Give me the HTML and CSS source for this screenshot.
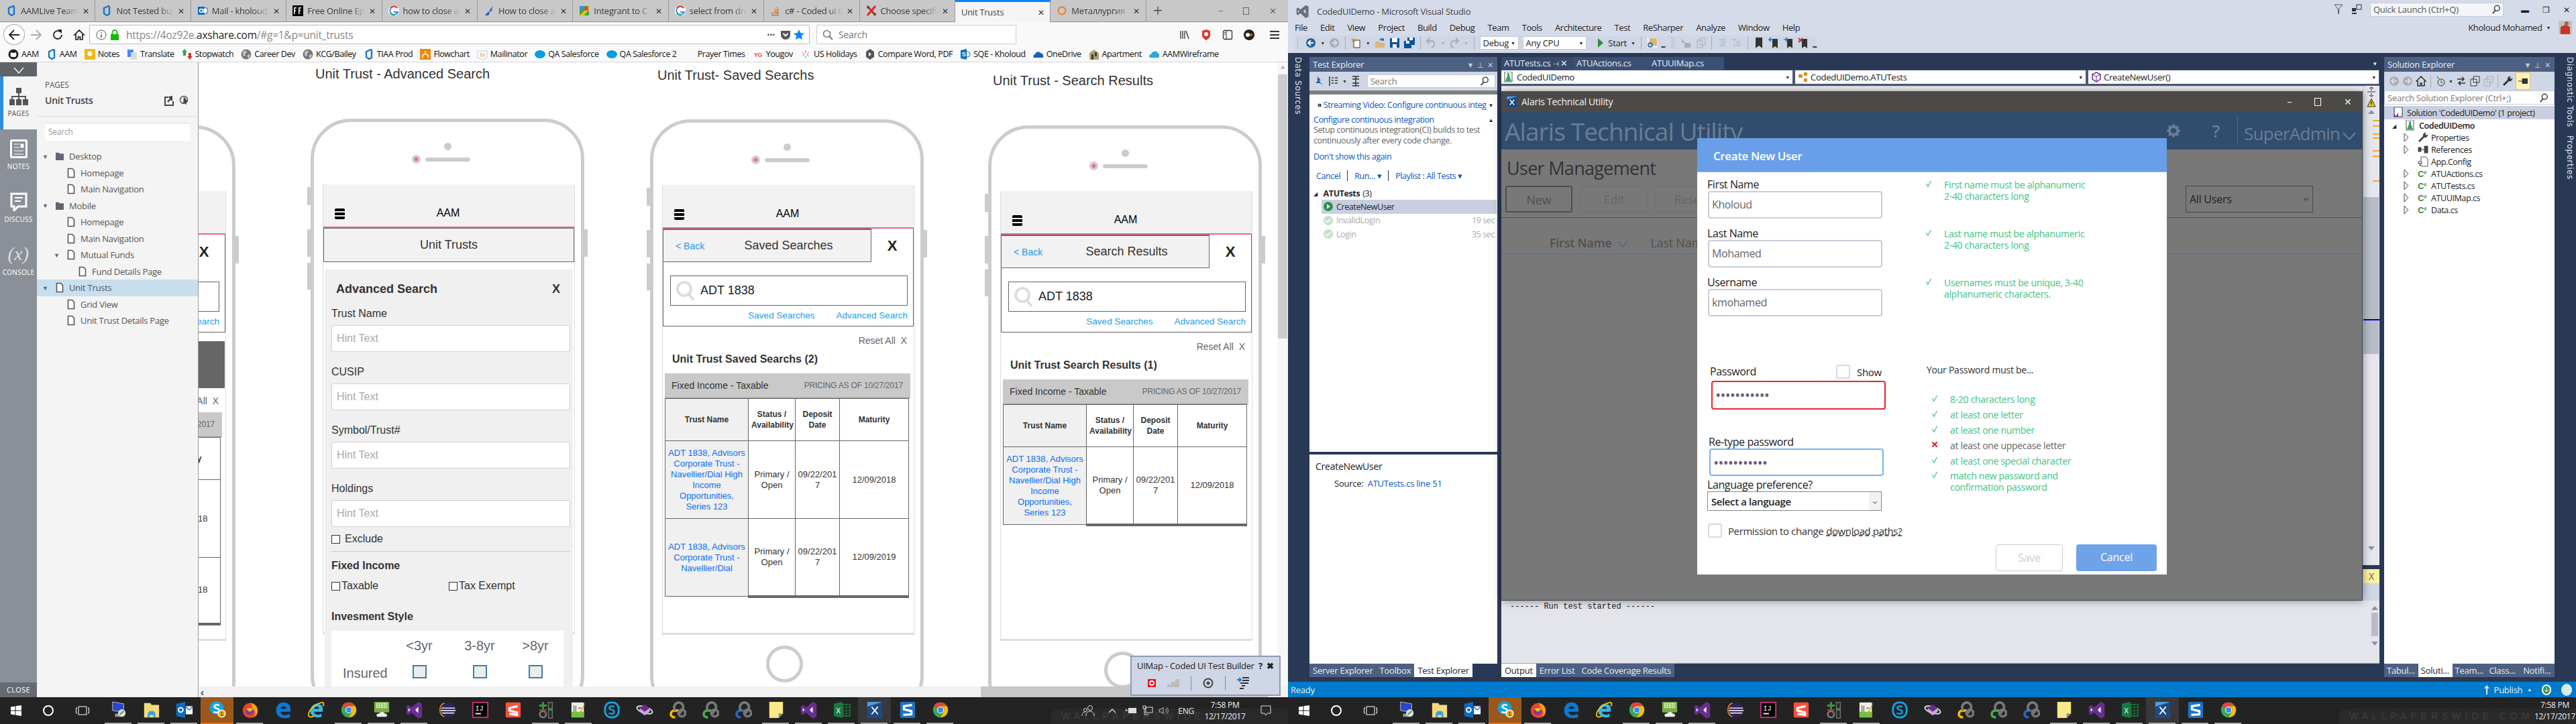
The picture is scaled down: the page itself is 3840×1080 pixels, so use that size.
FILE: index.html
```html
<!DOCTYPE html>
<html lang="en">
<head>
    <meta charset="UTF-8">
    <title>Unit Trusts / CodedUIDemo</title>
    <link rel="stylesheet" href="styles.css">
</head>
<body>

<!-- shared icons -->
<svg class="defs" width="0" height="0">
    <symbol id="aam" viewBox="0 0 16 16"><path d="M11 1 4 4v8l4 3 4-2V2z" fill="none" stroke="#1b78c9" stroke-width="2.4"/></symbol>
    <symbol id="doc" viewBox="0 0 12 16"><path d="M1.5 1.5h6l3 3v10h-9z" fill="#fff" stroke="#555" stroke-width="1.6"/></symbol>
    <symbol id="folder" viewBox="0 0 16 16"><path d="M0 1h6l2 2h8v13H0z" fill="#5f6670"/></symbol>
    <symbol id="globe" viewBox="0 0 16 16"><circle cx="8" cy="8" r="7.5" fill="#777"/><path d="M3 5l4-3 2 3-3 2 1 3-3 1zM10 9l4-1-2 6-2-2z" fill="#ccc"/></symbol>
    <symbol id="salesforce" viewBox="0 0 16 16"><ellipse cx="8" cy="8" rx="8" ry="6" fill="#0a9fe0"/></symbol>
    <symbol id="lens" viewBox="0 0 16 16"><circle cx="6.5" cy="6.5" r="5" fill="none" stroke="currentColor" stroke-width="1.6"/><path d="M10 10l5 5" stroke="currentColor" stroke-width="2"/></symbol>
    <symbol id="vsfind" viewBox="0 0 16 16"><circle cx="9.5" cy="6" r="4.5" fill="none" stroke="#444" stroke-width="1.8"/><path d="M6.5 9.5 2 15" stroke="#444" stroke-width="2.2"/></symbol>
    <symbol id="tick" viewBox="0 0 14 14"><path d="M2 7l3.5 6L12 1" fill="none" stroke="#41c481" stroke-width="1.8"/></symbol>
    <symbol id="cross" viewBox="0 0 14 14"><path d="M2 2l10 10M12 2 2 12" stroke="#e8202a" stroke-width="3"/></symbol>
    <symbol id="csfile" viewBox="0 0 16 16"><text x="0" y="13" font-size="13" font-weight="700" font-family="Liberation Sans" fill="#3c8a3c">C</text><text x="9" y="9" font-size="8" font-weight="700" font-family="Liberation Sans" fill="#3c8a3c">#</text></symbol>
    <symbol id="twist" viewBox="0 0 8 14"><path d="M1 1l6 6-6 6z" fill="none" stroke="#444"/></symbol>
    <symbol id="flask" viewBox="0 0 16 16"><rect x="1" y="0" width="11" height="15" fill="#fff" stroke="#555"/><path d="M5 2h3v4l3 8H2l3-8z" fill="#3ba55c"/></symbol>

    <symbol id="t-rdp" viewBox="0 0 28 28"><path d="M4 1l18 3v14L4 15z" fill="#2a46c8" stroke="#bbb"/><path d="M8 20h14v5H8z" fill="#9a9a9a"/><circle cx="19" cy="19" r="6" fill="#ddd"/><path d="M16 21l6-5" stroke="#3a9a3a" stroke-width="2"/></symbol>
    <symbol id="t-folder" viewBox="0 0 28 28"><path d="M2 3h10l2 3h12v20H2z" fill="#f5d97e"/><path d="M10 16h8v2h2v8h-3v-4h-6v4H8v-8h2z" fill="#2d9fe6"/></symbol>
    <symbol id="t-outlook" viewBox="0 0 28 28"><path d="M1 4l14-3v26L1 24z" fill="#0a6cc4"/><path d="M16 8h11v13H16z" fill="#fff"/><path d="M16 9l5.5 5L27 9" fill="none" stroke="#0a6cc4" stroke-width="1.5"/><circle cx="8" cy="14" r="3.6" fill="none" stroke="#fff" stroke-width="2"/></symbol>
    <symbol id="t-skype" viewBox="0 0 28 28"><circle cx="13" cy="12" r="11" fill="#12a5e6"/><path d="M17 8c-3-2-8-1-8 2s8 2 8 6-6 4-9 2" fill="none" stroke="#fff" stroke-width="2.5"/><circle cx="21" cy="21" r="6.5" fill="#fff"/><circle cx="21" cy="21" r="5" fill="#f5a800"/><text x="21" y="24.5" font-size="9" font-family="Liberation Sans" text-anchor="middle" fill="#222">1</text></symbol>
    <symbol id="t-firefox" viewBox="0 0 28 28"><circle cx="14" cy="15" r="12" fill="#e8452a"/><path d="M14 3c8 1 12 6 12 13 0 5-3 9-8 10 4-3 5-7 3-11-1-2-3-3-5-3 2-3 1-6-2-9z" fill="#f9a01b"/><circle cx="13" cy="16" r="6" fill="#7a3a9a"/><path d="M8 13c3-3 8-3 10 1l-5 3z" fill="#f7c21b"/></symbol>
    <symbol id="t-edge" viewBox="0 0 28 28"><path d="M3 15C3 7 8 2 15 2c7 0 11 5 11 12v3H10c0 6 9 7 15 3v6c-9 3-22 1-22-11zm7-3h9c0-5-8-5-9 0z" fill="#0a78d4"/></symbol>
    <symbol id="t-ie" viewBox="0 0 28 28"><path d="M5 16C5 9 10 4 16 4c6 0 9 4 9 10v3H11c0 5 7 6 12 3v5c-8 3-18 0-18-9zm6-4h8c0-4-7-4-8 0z" fill="#35b6ea"/><path d="M2 22C2 14 14 3 24 2c3 0 3 3 1 6M2 22c0 4 5 4 9 2" fill="none" stroke="#f2c20d" stroke-width="2"/></symbol>
    <symbol id="t-chrome" viewBox="0 0 28 28"><circle cx="14" cy="14" r="12" fill="#3aa757"/><path d="M14 2a12 12 0 0 1 10.4 6H14a6 6 0 0 0-5.6 3.8L4 6.5A12 12 0 0 1 14 2z" fill="#ea4335"/><path d="M24.4 8A12 12 0 0 1 14 26l5-8.500A6 6 0 0 0 14 8z" fill="#fbbc05"/><circle cx="14" cy="14" r="5.500" fill="#fff"/><circle cx="14" cy="14" r="4.300" fill="#4285f4"/></symbol>
    <symbol id="t-keys" viewBox="0 0 28 28"><rect x="2" y="1" width="24" height="17" rx="1" fill="#79ad43"/><path d="M5 4h18M5 7h18M5 10h18" stroke="#e6f3d4" stroke-width="2" stroke-dasharray="3 1"/><path d="M7 25c-3-3 0-6 3-5 2-4 8-3 9 0 4 0 5 4 2 5z" fill="#eee"/></symbol>
    <symbol id="t-vs" viewBox="0 0 28 28"><path d="M20 1l6 3v21l-6 3-11-10-5 4-3-2V8l3-2 5 4zM20 9l-5 5 5 5z M4 11v6l3-3z" fill="#6a2d91" fill-rule="evenodd"/><path d="M4 11v6l3-3zM20 9l-5 5 5 5z" fill="#fff"/></symbol>
    <symbol id="t-eclipse" viewBox="0 0 28 28"><circle cx="15" cy="14" r="12" fill="#2c2255"/><path d="M4 11h22M3 15h24M5 19h20" stroke="#e8e4f5" stroke-width="1.8"/><path d="M9 3a12 12 0 0 0 0 22" fill="none" stroke="#f08c1e" stroke-width="1.6"/></symbol>
    <symbol id="t-idea" viewBox="0 0 28 28"><rect x="2" y="2" width="24" height="24" fill="#000" stroke="#c8337a" stroke-width="2"/><text x="6" y="15" font-size="11" font-family="Liberation Mono" fill="#fff">IJ</text><path d="M6 20h9" stroke="#fff" stroke-width="2"/></symbol>
    <symbol id="t-sublime" viewBox="0 0 28 28"><rect x="2" y="2" width="24" height="24" rx="2" fill="#f9513c"/><path d="M21 8 8 11v4l12 3v4L8 20M8 15" fill="none" stroke="#fff" stroke-width="3.5"/></symbol>
    <symbol id="t-git" viewBox="0 0 28 28"><path d="M3 7h12M9 1v12" stroke="#3a9a3a" stroke-width="3"/><path d="M3 14h12" stroke="#c33" stroke-width="2"/><circle cx="9" cy="21" r="5" fill="none" stroke="#777" stroke-width="3"/><path d="M18 2h6v25h-6z" fill="none" stroke="#666" stroke-width="2"/><path d="M18 15l6-4M18 11l6 4" stroke="#3a9a3a" stroke-width="2"/></symbol>
    <symbol id="t-notepad" viewBox="0 0 28 28"><path d="M2 2h20v24H2z" fill="#eef0e0"/><path d="M2 17h20v9H2z" fill="#6fc13f"/><path d="M6 7v10M9 7v10M13 11h5" stroke="#333"/><path d="M25 1 15 18l-1 3 3-2z" fill="#e8a020"/></symbol>
    <symbol id="t-skype2" viewBox="0 0 28 28"><rect x="3" y="2" width="22" height="24" rx="10" fill="none" stroke="#12a5e6" stroke-width="3"/><path d="M18 9c-3-2-8-1-8 2s8 2 8 6-6 4-9 2" fill="none" stroke="#12a5e6" stroke-width="2.500"/></symbol>
    <symbol id="t-planet" viewBox="0 0 28 28"><ellipse cx="14" cy="14" rx="13" ry="5" fill="none" stroke="#ddd" stroke-width="2" transform="rotate(18 14 14)"/><path d="M6 11l8-6 8 6-8 6z" fill="#6d2a91"/><path d="M6 11v6l8 6 8-6v-6l-8 6z" fill="#c9a8dc"/></symbol>
    <symbol id="t-link" viewBox="0 0 28 28"><path d="M10 26c-9 0-9-11 0-11h5" fill="none" stroke="currentColor" stroke-width="4"/><path d="M10 15c-4-7 1-13 6-13s9 6 6 11l-5 7" fill="none" stroke="#777" stroke-width="4"/><circle cx="21" cy="19" r="5.500" fill="none" stroke="#777" stroke-width="4"/></symbol>
    <symbol id="t-note" viewBox="0 0 28 28"><path d="M3 1h22v19l-7 7H3z" fill="#f8e98a"/><path d="M25 20h-7v7z" fill="#888"/></symbol>
    <symbol id="t-excel" viewBox="0 0 28 28"><path d="M1 4l14-3v26L1 24z" fill="#1a7a42"/><path d="M16 5h11v19H16z" fill="none" stroke="#1a7a42" stroke-width="1.500"/><path d="M16 10h11M16 15h11M16 20h11M21 5v19" stroke="#1a7a42"/><text x="8" y="19" font-size="11" font-family="Liberation Sans" text-anchor="middle" fill="#fff">X</text></symbol>
    <symbol id="t-alaris" viewBox="0 0 28 28"><path d="M2 1h24v26H2z" fill="#1e4a82"/><path d="M2 1h24L2 9z" fill="#49a0e0"/><path d="M9 9l10 12M19 9 9 21" stroke="#fff" stroke-width="2"/></symbol>
    <symbol id="t-s" viewBox="0 0 28 28"><path d="M4 1h20a2 2 0 0 1 2 2v22a2 2 0 0 1-2 2H4a2 2 0 0 1-2-2V3a2 2 0 0 1 2-2z" fill="#1c74c4"/><path d="M21 6 8 8v5l12 3v5L7 22" fill="none" stroke="#fff" stroke-width="3.500"/></symbol>
</svg>

<div class="desk">

<!-- left monitor: browser -->
<section class="monitor">
    <div class="firefox">
        <div class="tabs">
            <div class="tab"><svg class="ico"><use href="#aam"/></svg><span class="tab-title">AAMLive Team</span><span class="tab-x">✕</span></div>
            <div class="tab"><svg class="ico"><use href="#aam"/></svg><span class="tab-title">Not Tested bug</span><span class="tab-x">✕</span></div>
            <div class="tab">
                <svg class="ico" viewBox="0 0 16 16"><path d="M1 2h10v12H1z" fill="#0a6cc4"/><path d="M9 4h6v8H9z" fill="#fff" stroke="#0a6cc4"/><circle cx="6" cy="8" r="2.500" fill="none" stroke="#fff" stroke-width="1.500"/></svg>
                <span class="tab-title">Mail - kholoud.k</span><span class="tab-x">✕</span>
            </div>
            <div class="tab">
                <svg class="ico" viewBox="0 0 16 16"><rect width="16" height="16"/><path d="M2 3h4v1.500H3.500V7H5v1.500H3.500V13H2zM9 3h4v1.500h-2.500V7H12v1.500h-1.500V13H9z" fill="#fff"/></svg>
                <span class="tab-title">Free Online Epo</span><span class="tab-x">✕</span>
            </div>
            <div class="tab">
                <svg class="ico" viewBox="0 0 16 16"><circle cx="8" cy="8" r="8" fill="#fff"/><path d="M13 4a6 6 0 1 0 1 6H8" fill="none" stroke="#4285f4" stroke-width="2"/><path d="M3 4a6 6 0 0 1 10 0" fill="none" stroke="#ea4335" stroke-width="2"/><path d="M3 12a6 6 0 0 0 7 2" fill="none" stroke="#34a853" stroke-width="2"/></svg>
                <span class="tab-title">how to close ap</span><span class="tab-x">✕</span>
            </div>
            <div class="tab">
                <svg class="ico" viewBox="0 0 16 16"><path d="M14 1 8 8l3 2zM7 9l-5 6h5l2-4z" fill="#2a5fb5"/></svg>
                <span class="tab-title">How to close a</span><span class="tab-x">✕</span>
            </div>
            <div class="tab">
                <svg class="ico" viewBox="0 0 16 16"><path d="M1 1h14v14H1z" fill="#35a853"/><path d="M1 15 15 1v6L7 15z" fill="#fbbc05"/><path d="M1 1h7L1 8z" fill="#4285f4"/><circle cx="11" cy="5" r="3" fill="#ea4335"/></svg>
                <span class="tab-title">Integrant to C</span><span class="tab-x">✕</span>
            </div>
            <div class="tab">
                <svg class="ico" viewBox="0 0 16 16"><circle cx="8" cy="8" r="8" fill="#fff"/><path d="M13 4a6 6 0 1 0 1 6H8" fill="none" stroke="#4285f4" stroke-width="2"/><path d="M3 4a6 6 0 0 1 10 0" fill="none" stroke="#ea4335" stroke-width="2"/><path d="M3 12a6 6 0 0 0 7 2" fill="none" stroke="#34a853" stroke-width="2"/></svg>
                <span class="tab-title">select from drop</span><span class="tab-x">✕</span>
            </div>
            <div class="tab">
                <svg class="ico" viewBox="0 0 16 16"><path d="M3 10v5h9v-5" fill="none" stroke="#888" stroke-width="1.300"/><path d="M5 12h6M5.500 9.500l6 1M6 7l5.500 3M7.500 4.500l4.500 4.500M10 2l3 5.500" stroke="#f48024" stroke-width="1.300"/></svg>
                <span class="tab-title">c# - Coded ui te</span><span class="tab-x">✕</span>
            </div>
            <div class="tab">
                <svg class="ico" viewBox="0 0 16 16"><path d="M2 1l12 14M14 1 2 15" stroke="#d52b2b" stroke-width="3"/><circle cx="3" cy="3" r="2" fill="#555"/><circle cx="13" cy="13" r="2" fill="#555"/></svg>
                <span class="tab-title">Choose specific</span><span class="tab-x">✕</span>
            </div>
            <div class="tab tab-active"><span class="tab-title">Unit Trusts</span><span class="tab-x">✕</span></div>
            <div class="tab">
                <svg class="ico" viewBox="0 0 16 16"><circle cx="8" cy="8" r="5.500" fill="none" stroke="#ef7d22" stroke-width="2"/></svg>
                <span class="tab-title">Металлургия</span><span class="tab-x">✕</span>
            </div>
            <div class="tab-new">+</div>
            <div class="win-btns">
                <span>−</span><span class="win-restore"></span><span class="win-close">✕</span>
            </div>
        </div>

        <div class="navbar">
            <span class="back-btn">
                <svg width="18" height="18" viewBox="0 0 18 18"><path d="M9 2 2 9l7 7M2 9h15" fill="none" stroke="#222" stroke-width="1.800"/></svg>
            </span>
            <svg class="nav-ico" viewBox="0 0 18 18"><path d="M9 2l7 7-7 7M16 9H1" fill="none" stroke="#aaa" stroke-width="1.800"/></svg>
            <svg class="nav-ico" viewBox="0 0 18 18"><path d="M15 9a6 6 0 1 1-2-4.500" fill="none" stroke="#222" stroke-width="1.800"/><path d="M9 1h6v6z" fill="#222"/></svg>
            <svg class="nav-ico" viewBox="0 0 18 18"><path d="M9 2 2 9h2v7h3.500v-4h3v4H14V9h2z" fill="none" stroke="#222" stroke-width="1.700"/></svg>
            <div class="urlbar">
                <svg class="ico" viewBox="0 0 16 16"><circle cx="8" cy="8" r="7" fill="none" stroke="#555"/><path d="M8 7v5M8 4v1.500" stroke="#555" stroke-width="1.500"/></svg>
                <svg class="ico" viewBox="0 0 16 16"><rect x="2" y="7" width="12" height="9" fill="#12bc00"/><path d="M4.500 7V4.500a3.500 3.500 0 0 1 7 0V7" fill="none" stroke="#12bc00" stroke-width="1.800"/></svg>
                <span class="url-text">https://4oz92e.<b>axshare.com</b>/#g=1&amp;p=unit_trusts</span>
                <span class="url-dots">•••</span>
                <svg class="ico" viewBox="0 0 16 16"><path d="M1 2h14v6a7 7 0 0 1-14 0z" fill="#555"/><path d="M4.500 6 8 9.500 11.500 6" fill="none" stroke="#fff" stroke-width="2"/></svg>
                <svg class="ico" viewBox="0 0 16 16"><path d="M8 0l2.400 5.200 5.600.6-4.200 3.800 1.200 5.600L8 12.400 3 15.200l1.200-5.600L0 5.800l5.600-.6z" fill="#0a84ff"/></svg>
            </div>
            <div class="searchbar">
                <svg class="ico"><use href="#lens"/></svg>
                <i>Search</i>
            </div>
            <div class="nav-right">
                <svg class="ico" viewBox="0 0 16 16"><path d="M2 2v12M5 2v12M8 2v12M10 2l4 12" stroke="#333" stroke-width="1.300"/></svg>
                <svg class="ico" viewBox="0 0 16 16"><path d="M2 2l6-2 6 2v7c0 3-3 5-6 7-3-2-6-4-6-7z" fill="#d9382d"/><circle cx="8" cy="7" r="3" fill="#fff"/></svg>
                <svg class="ico" viewBox="0 0 16 16"><rect x="1.500" y="1.500" width="13" height="13" rx="2" fill="none" stroke="#333" stroke-width="1.300"/><path d="M6 2v12M3 4.500h2M3 7h2" stroke="#333"/></svg>
                <svg class="ico" viewBox="0 0 16 16"><circle cx="8" cy="8" r="8" fill="#222"/><circle cx="6" cy="8" r="3" fill="#fff"/><circle cx="11" cy="8" r="2" fill="#e2562e"/></svg>
                <svg class="ico nav-menu" viewBox="0 0 16 16"><path d="M1 3h14M1 8h14M1 13h14" stroke="#333" stroke-width="2"/></svg>
            </div>
        </div>

        <div class="bookmarks">
            <span class="bm"><svg class="ico" viewBox="0 0 16 16"><circle cx="8" cy="8" r="7.500" fill="#222"/><path d="M5 12c-2-2-2-6 0-7l2 1h2l2-1c2 1 2 5 0 7z" fill="#fff"/></svg>AAM</span>
            <span class="bm"><svg class="ico"><use href="#aam"/></svg>AAM</span>
            <span class="bm"><svg class="ico" viewBox="0 0 16 16"><rect width="16" height="16" fill="#f3b917"/><circle cx="8" cy="7" r="3.500" fill="#fff"/></svg>Notes</span>
            <span class="bm"><svg class="ico" viewBox="0 0 16 16"><path d="M1 1h9v11H1z" fill="#4a8af4"/><path d="M6 5h9v11H6z" fill="#ddd"/></svg>Translate</span>
            <span class="bm"><svg class="ico" viewBox="0 0 16 16"><path d="M4 0l4 5H6v5H2V5H0z" fill="#2fa84a"/><path d="M12 16l4-5h-2V6h-4v5H8z" fill="#d6322c"/></svg>Stopwatch</span>
            <span class="bm"><svg class="ico"><use href="#globe"/></svg>Career Dev</span>
            <span class="bm"><svg class="ico"><use href="#globe"/></svg>KCG/Bailey</span>
            <span class="bm"><svg class="ico"><use href="#aam"/></svg>TIAA Prod</span>
            <span class="bm"><svg class="ico" viewBox="0 0 16 16"><rect width="16" height="16" fill="#f08705"/><path d="M8 3v4M4 9v4M12 9v4M4 9l4-2 4 2" stroke="#fff" stroke-width="1.500" fill="none"/></svg>Flowchart</span>
            <span class="bm"><svg class="ico" viewBox="0 0 16 16"><path d="M1 3h14v10l-7 3-7-3z" fill="#fff" stroke="#a8d0ef"/><text x="8" y="12" font-size="9" font-family="Liberation Sans" text-anchor="middle" fill="#e8a020">M</text></svg>Mailinator</span>
            <span class="bm"><svg class="ico"><use href="#salesforce"/></svg>QA Salesforce</span>
            <span class="bm"><svg class="ico"><use href="#salesforce"/></svg>QA Salesforce 2</span>
            <span class="bm"><span class="ico"></span>Prayer Times</span>
            <span class="bm"><svg class="ico" viewBox="0 0 16 16"><rect width="16" height="16" fill="#fff"/><text x="8" y="12" font-size="9" font-family="Liberation Sans" font-weight="700" text-anchor="middle" fill="#e2582a">YG</text></svg>Yougov</span>
            <span class="bm"><svg class="ico" viewBox="0 0 16 16"><rect width="16" height="16" fill="#fff"/><path d="M8 2v4M3 5l3 3M13 5l-3 3" stroke="#e33"/><path d="M8 14v-4M3 11l3-2M13 11l-3-2" stroke="#2a9fd6"/></svg>US Holidays</span>
            <span class="bm"><svg class="ico" viewBox="0 0 16 16"><path d="M8 0l6 4v8l-6 4-6-4V4z" fill="#555"/><path d="M6 5l4 3-4 3z" fill="#fff"/></svg>Compare Word, PDF</span>
            <span class="bm"><svg class="ico" viewBox="0 0 16 16"><path d="M1 2l9-2v16l-9-2z" fill="#0b6fb8"/><circle cx="11" cy="8" r="4" fill="none" stroke="#0b6fb8"/><text x="5.500" y="11" font-size="9" font-family="Liberation Sans" font-weight="700" text-anchor="middle" fill="#fff">S</text></svg>SQE - Kholoud</span>
            <span class="bm"><svg class="ico" viewBox="0 0 16 16"><path d="M1 13c-2-3 1-5 2-5 1-4 6-5 8-2 3 0 5 3 4 7z" fill="#1a5fc4"/></svg>OneDrive</span>
            <span class="bm"><svg class="ico" viewBox="0 0 16 16"><path d="M1 16V6l7-5 7 5v10z" fill="#b9a060"/><path d="M4 8h3v8H4zM9 5h3v6H9z" fill="#29406a"/></svg>Apartment</span>
            <span class="bm"><svg class="ico" viewBox="0 0 16 16"><path d="M1 13c-2-3 0-5 2-5 1-5 8-6 10-2 2 0 3 5 1 7z" fill="#2aa8d8"/></svg>AAMWireframe</span>
        </div>

        <div class="axure">
            <nav class="rail">
                <div class="rail-toggle">
                    <svg width="16" height="10" viewBox="0 0 16 10"><path d="M1 1l7 8 7-8" fill="none" stroke="#fff" stroke-width="1.300"/></svg>
                </div>
                <div class="rail-item rail-item-on">
                    <svg width="28" height="26" viewBox="0 0 28 26"><path d="M10 0h8v8h-8zM0 17h8v9H0zM10 17h8v9h-8zM20 17h8v9h-8z" fill="#555"/><path d="M14 8v5M4 17v-4h20v4M14 13v4" fill="none" stroke="#555" stroke-width="2"/></svg>
                    <span>PAGES</span>
                </div>
                <div class="rail-item">
                    <svg width="26" height="28" viewBox="0 0 26 28"><rect x="1.500" y="1.500" width="23" height="25" rx="1" fill="none" stroke="#fff" stroke-width="3"/><path d="M6 7h8M6 12h8M6 17h14M6 22h14M16 7h4v5h-4z" fill="#fff" stroke="#fff"/></svg>
                    <span>NOTES</span>
                </div>
                <div class="rail-item">
                    <svg width="26" height="28" viewBox="0 0 26 28"><path d="M2 2h22v19H12l-6 6v-6H2z" fill="none" stroke="#fff" stroke-width="3"/><path d="M7 8h12M7 13h9" stroke="#fff" stroke-width="2"/></svg>
                    <span>DISCUSS</span>
                </div>
                <div class="rail-item">
                    <em class="rail-x">(x)</em>
                    <span>CONSOLE</span>
                </div>
                <div class="rail-close">CLOSE</div>
            </nav>

            <aside class="pages">
                <div class="pages-head">
                    <div class="pages-label">PAGES</div>
                    <div class="pages-row">
                        <strong>Unit Trusts</strong>
                        <svg class="ico" viewBox="0 0 16 16"><path d="M2 2h6v2H4v10h10v-5h2v7H2zM14 1v8l-3-2-3 4-2-2 4-4-2-3z" fill="#444"/></svg>
                        <svg class="ico" viewBox="0 0 16 16"><circle cx="7" cy="7" r="5.500" fill="none" stroke="#555" stroke-width="1.500"/><path d="M7 2l6 8-3 0 1 5-3-4-2 2z" fill="#444"/></svg>
                    </div>
                </div>
                <div class="pages-search">Search</div>
                <ul class="tree">
                    <li class="lv0"><span class="twisty">▼</span><svg class="tree-ico"><use href="#folder"/></svg>Desktop</li>
                    <li class="lv1"><span class="twisty"></span><svg class="tree-ico"><use href="#doc"/></svg>Homepage</li>
                    <li class="lv1"><span class="twisty"></span><svg class="tree-ico"><use href="#doc"/></svg>Main Navigation</li>
                    <li class="lv0"><span class="twisty">▼</span><svg class="tree-ico"><use href="#folder"/></svg>Mobile</li>
                    <li class="lv1"><span class="twisty"></span><svg class="tree-ico"><use href="#doc"/></svg>Homepage</li>
                    <li class="lv1"><span class="twisty"></span><svg class="tree-ico"><use href="#doc"/></svg>Main Navigation</li>
                    <li class="lv1"><span class="twisty">▼</span><svg class="tree-ico"><use href="#doc"/></svg>Mutual Funds</li>
                    <li class="lv2"><span class="twisty"></span><svg class="tree-ico"><use href="#doc"/></svg>Fund Details Page</li>
                    <li class="lv0 tree-on"><span class="twisty">▼</span><svg class="tree-ico"><use href="#doc"/></svg>Unit Trusts</li>
                    <li class="lv1"><span class="twisty"></span><svg class="tree-ico"><use href="#doc"/></svg>Grid View</li>
                    <li class="lv1"><span class="twisty"></span><svg class="tree-ico"><use href="#doc"/></svg>Unit Trust Details Page</li>
                </ul>
            </aside>

            <div class="viewer">
                <div class="viewer-main">
                    <main class="canvas">
                        <h2 class="sheet-title sheet-title-adv">Unit Trust - Advanced Search</h2>
                        <h2 class="sheet-title sheet-title-saved">Unit Trust- Saved Searchs</h2>
                        <h2 class="sheet-title sheet-title-results">Unit Trust - Search Results</h2>

                        <!-- phone cut off by the side panel: only what shows past the panel has text -->
                        <div class="phone phone-back">
                            <span class="side side-a"></span><span class="side side-b"></span><span class="side side-c"></span><span class="side side-d"></span>
                            <div class="phone-top"><span class="cam"></span><div class="speaker-row"><span class="lens"></span><span class="speaker"></span></div></div>
                            <div class="screen">
                                <div class="app-head"></div>
                                <div class="nav2">
                                    <div class="nav2-left"></div>
                                    <div class="nav2-x">X</div>
                                </div>
                                <div class="find">
                                    <div class="find-input"></div>
                                    <div class="find-links"><a>Advanced Search</a></div>
                                </div>
                                <div class="filled"></div>
                                <div class="reset">Reset All &nbsp;X</div>
                                <div class="grp"><span></span><small>PRICING AS OF 10/27/2017</small></div>
                                <table class="grid grid-short">
                                    <tr><th></th><th></th><th></th><th>Maturity</th></tr>
                                    <tr><th class="name"></th><td></td><td></td><td>12/09/2018</td></tr>
                                    <tr class="last"><th class="name"></th><td></td><td></td><td>12/09/2018</td></tr>
                                </table>
                            </div>
                        </div>

                        <!-- advanced search -->
                        <div class="phone phone-adv">
                            <span class="side side-a"></span><span class="side side-b"></span><span class="side side-c"></span><span class="side side-d"></span>
                            <div class="phone-top"><span class="cam"></span><div class="speaker-row"><span class="lens"></span><span class="speaker"></span></div></div>
                            <div class="screen">
                                <div class="app-head"><span class="burger"></span><span class="app-name">AAM</span></div>
                                <div class="nav1">Unit Trusts</div>
                                <form class="adv">
                                    <div class="adv-head"><b>Advanced Search</b><b>X</b></div>
                                    <label>Trust Name</label><div class="hint">Hint Text</div>
                                    <label>CUSIP</label><div class="hint">Hint Text</div>
                                    <label>Symbol/Trust#</label><div class="hint">Hint Text</div>
                                    <label>Holdings</label><div class="hint">Hint Text</div>
                                    <div class="adv-check"><span class="box"></span>Exclude</div>
                                    <hr>
                                    <h4>Fixed Income</h4>
                                    <div class="adv-pair">
                                        <span class="adv-opt"><span class="box"></span>Taxable</span>
                                        <span class="adv-opt"><span class="box"></span>Tax Exempt</span>
                                    </div>
                                    <h4 class="adv-style">Invesment Style</h4>
                                    <div class="style-grid">
                                        <span></span><span>&lt;3yr</span><span>3-8yr</span><span>&gt;8yr</span>
                                        <span class="style-name">Insured</span><span><i class="style-box"></i></span><span><i class="style-box"></i></span><span><i class="style-box"></i></span>
                                    </div>
                                </form>
                            </div>
                        </div>

                        <!-- saved searches -->
                        <div class="phone phone-saved">
                            <span class="side side-a"></span><span class="side side-b"></span><span class="side side-c"></span><span class="side side-d"></span>
                            <div class="phone-top"><span class="cam"></span><div class="speaker-row"><span class="lens"></span><span class="speaker"></span></div></div>
                            <div class="screen">
                                <div class="app-head"><span class="burger"></span><span class="app-name">AAM</span></div>
                                <div class="nav2">
                                    <div class="nav2-left"><a>&lt; Back</a><span class="nav2-title">Saved Searches</span></div>
                                    <div class="nav2-x">X</div>
                                </div>
                                <div class="find">
                                    <div class="find-input"><svg class="find-lens" viewBox="0 0 31 31"><circle cx="14" cy="13" r="10" fill="none" stroke="#ddd" stroke-width="4"/><path d="M21 21l7 9" stroke="#ddd" stroke-width="4"/></svg>ADT 1838</div>
                                    <div class="find-links"><a>Saved Searches</a><a>Advanced Search</a></div>
                                </div>
                                <div class="reset">Reset All &nbsp;X</div>
                                <h3 class="found">Unit Trust Saved Searchs (2)</h3>
                                <div class="grp"><span>Fixed Income - Taxable</span><small>PRICING AS OF 10/27/2017</small></div>
                                <table class="grid">
                                    <tr><th>Trust Name</th><th>Status / Availability</th><th>Deposit Date</th><th>Maturity</th></tr>
                                    <tr><th class="name"><a>ADT 1838, Advisors Corporate Trust - Navellier/Dial High Income Opportunities, Series 123</a></th><td>Primary / Open</td><td class="date">09/22/2017</td><td>12/09/2018</td></tr>
                                    <tr class="last"><th class="name"><a>ADT 1838, Advisors Corporate Trust - Navellier/Dial</a></th><td>Primary / Open</td><td class="date">09/22/2017</td><td>12/09/2019</td></tr>
                                </table>
                            </div>
                            <div class="home"></div>
                        </div>

                        <!-- search results -->
                        <div class="phone phone-results">
                            <span class="side side-a"></span><span class="side side-b"></span><span class="side side-c"></span><span class="side side-d"></span>
                            <div class="phone-top"><span class="cam"></span><div class="speaker-row"><span class="lens"></span><span class="speaker"></span></div></div>
                            <div class="screen">
                                <div class="app-head"><span class="burger"></span><span class="app-name">AAM</span></div>
                                <div class="nav2">
                                    <div class="nav2-left"><a>&lt; Back</a><span class="nav2-title">Search Results</span></div>
                                    <div class="nav2-x">X</div>
                                </div>
                                <div class="find">
                                    <div class="find-input"><svg class="find-lens" viewBox="0 0 31 31"><circle cx="14" cy="13" r="10" fill="none" stroke="#ddd" stroke-width="4"/><path d="M21 21l7 9" stroke="#ddd" stroke-width="4"/></svg>ADT 1838</div>
                                    <div class="find-links"><a>Saved Searches</a><a>Advanced Search</a></div>
                                </div>
                                <div class="reset">Reset All &nbsp;X</div>
                                <h3 class="found">Unit Trust Search Results (1)</h3>
                                <div class="grp"><span>Fixed Income - Taxable</span><small>PRICING AS OF 10/27/2017</small></div>
                                <table class="grid">
                                    <tr><th>Trust Name</th><th>Status / Availability</th><th>Deposit Date</th><th>Maturity</th></tr>
                                    <tr class="last"><th class="name"><a>ADT 1838, Advisors Corporate Trust - Navellier/Dial High Income Opportunities, Series 123</a></th><td>Primary / Open</td><td class="date">09/22/2017</td><td>12/09/2018</td></tr>
                                </table>
                            </div>
                            <div class="home"></div>
                        </div>
                    </main>
                    <div class="vbar"><span class="vbar-up">^</span><span class="vbar-thumb"></span></div>
                </div>
                <div class="hbar"><span class="hbar-left">‹</span><span class="hbar-thumb"></span></div>
            </div>
        </div>

        <div class="uimap">
            <div class="uimap-head"><span>UIMap - Coded UI Test Builder</span><b>?&nbsp; ✖</b></div>
            <div class="uimap-tools">
                <svg width="12" height="12" viewBox="0 0 12 12"><rect width="12" height="12" fill="#e81123"/><circle cx="6" cy="6" r="3" fill="none" stroke="#fff" stroke-width="1.800"/></svg>
                <svg width="18" height="12" viewBox="0 0 18 12"><path d="M0 12V8h6V4h6V0h6v12z" fill="#bbb"/></svg>
                <i class="uimap-sep"></i>
                <svg width="16" height="16" viewBox="0 0 16 16"><circle cx="8" cy="8" r="6.500" fill="none" stroke="#444" stroke-width="2"/><circle cx="8" cy="8" r="2.500" fill="#444"/></svg>
                <i class="uimap-sep"></i>
                <svg width="18" height="18" viewBox="0 0 18 18"><path d="M0 4h5M3 1l3 3-3 3" fill="none" stroke="#1a7bd4" stroke-width="2"/><path d="M8 1h10M8 5h10M5 9h12M7 13h5M4 17h6" stroke="#333" stroke-width="2"/></svg>
            </div>
        </div>
    </div>

    <div class="taskbar">
        <svg class="tb-start" viewBox="0 0 16 16"><path d="M0 2.500l6.500-1V7.500H0zM7.500 1.300 16 0v7.500H7.500zM0 8.500h6.500v6L0 13.500zM7.500 8.500H16V16l-8.500-1.300z" fill="#fff"/></svg>
        <span class="tb-circle"></span>
        <svg class="tb-view" viewBox="0 0 20 14"><rect x="4" y="1" width="12" height="12" fill="none" stroke="#fff"/><path d="M2 3H.5v8H2M18 3h1.500v8H18" fill="none" stroke="#fff"/></svg>
        <div class="apps">
            <span class="app on"><svg><use href="#t-rdp"/></svg></span>
            <span class="app on"><svg><use href="#t-folder"/></svg></span>
            <span class="app on"><svg><use href="#t-outlook"/></svg></span>
            <span class="app alert"><svg><use href="#t-skype"/></svg></span>
            <span class="app on"><svg><use href="#t-firefox"/></svg></span>
            <span class="app"><svg><use href="#t-edge"/></svg></span>
            <span class="app"><svg><use href="#t-ie"/></svg></span>
            <span class="app on"><svg><use href="#t-chrome"/></svg></span>
            <span class="app on"><svg><use href="#t-keys"/></svg></span>
            <span class="app on"><svg><use href="#t-vs"/></svg></span>
            <span class="app"><svg><use href="#t-eclipse"/></svg></span>
            <span class="app"><svg><use href="#t-idea"/></svg></span>
            <span class="app"><svg><use href="#t-sublime"/></svg></span>
            <span class="app on"><svg><use href="#t-git"/></svg></span>
            <span class="app on"><svg><use href="#t-notepad"/></svg></span>
            <span class="app"><svg><use href="#t-skype2"/></svg></span>
            <span class="app"><svg><use href="#t-planet"/></svg></span>
            <span class="app link-y"><svg><use href="#t-link"/></svg></span>
            <span class="app link-g"><svg><use href="#t-link"/></svg></span>
            <span class="app link-b"><svg><use href="#t-link"/></svg></span>
            <span class="app on"><svg><use href="#t-note"/></svg></span>
            <span class="app on"><svg><use href="#t-vs"/></svg></span>
            <span class="app on"><svg><use href="#t-excel"/></svg></span>
            <span class="app cur"><svg><use href="#t-alaris"/></svg></span>
            <span class="app on"><svg><use href="#t-s"/></svg></span>
            <span class="app on"><svg><use href="#t-chrome"/></svg></span>
        </div>
        <span class="wm">WALLPAPERSWIDE.COM</span>
        <div class="tray">
            <svg width="20" height="20" viewBox="0 0 20 20"><circle cx="13" cy="6" r="3.500" fill="none" stroke="#ddd"/><path d="M7 18c0-5 3-7 6-7s6 2 6 7M1 18c0-4 2-6 5-6" fill="none" stroke="#ddd"/><circle cx="6" cy="9" r="2.500" fill="none" stroke="#ddd"/></svg>
            <svg class="tray-up" width="12" height="8" viewBox="0 0 12 8"><path d="M1 7l5-5 5 5" fill="none" stroke="#ddd" stroke-width="1.300"/></svg>
            <svg width="18" height="12" viewBox="0 0 18 12"><rect x="5" y="2" width="12" height="8" fill="#ddd"/><path d="M0 6h5M2 3v3" stroke="#ddd"/></svg>
            <svg width="16" height="16" viewBox="0 0 16 16"><rect x="5" y="3" width="10" height="8" fill="none" stroke="#ddd"/><rect x="1" y="1" width="4" height="4" fill="none" stroke="#ddd"/><path d="M3 5v9h6" fill="none" stroke="#ddd"/></svg>
            <svg width="16" height="14" viewBox="0 0 16 14"><path d="M1 5h3l3-3v10L4 9H1zM10 4c2 2 2 4 0 6M12 2c3 3 3 7 0 10" fill="none" stroke="#bbb"/></svg>
            <span class="tray-lang">ENG</span>
            <span class="clock"><span>7:58 PM</span><span>12/17/2017</span></span>
            <svg class="tray-note" width="16" height="16" viewBox="0 0 16 16"><path d="M1 1h14v11h-5l-2 3-2-3H1z" fill="none" stroke="#ddd"/></svg>
        </div>
    </div>
</section>

<!-- right monitor: visual studio -->
<section class="monitor">
    <div class="vs">
        <header class="vs-chrome">
            <div class="vs-title">
                <svg class="vs-logo" width="20" height="20" viewBox="0 0 28 28"><path d="M20 1l6 3v21l-6 3-11-10-5 4-3-2V8l3-2 5 4zM20 9l-5 5 5 5zM4 11v6l3-3z" fill="#68707d" fill-rule="evenodd"/></svg>
                <span class="vs-name">CodedUIDemo - Microsoft Visual Studio</span>
                <svg class="vs-filter" width="14" height="16" viewBox="0 0 14 16"><path d="M1 1h12L8 7l-1 8-1-8z" fill="none" stroke="#555"/></svg>
                <svg width="16" height="16" viewBox="0 0 16 16"><rect x="8" y="1" width="7" height="7" fill="none" stroke="#333"/><rect x="1" y="6" width="6" height="5" fill="#333"/><path d="M1 14h7" stroke="#333" stroke-width="2"/></svg>
                <div class="quick">Quick Launch (Ctrl+Q)<svg width="14" height="14"><use href="#vsfind"/></svg></div>
                <div class="vs-win"><span>▬</span><span>❐</span><span>✕</span></div>
            </div>
            <div class="vs-menu">
                <span>File</span><span>Edit</span><span>View</span><span>Project</span><span>Build</span><span>Debug</span><span>Team</span><span>Tools</span><span>Architecture</span><span>Test</span><span>ReSharper</span><span>Analyze</span><span>Window</span><span>Help</span>
                <div class="vs-user">Kholoud Mohamed <small>▼</small>
                    <svg width="20" height="20" viewBox="0 0 20 20"><rect width="20" height="20" fill="#c8c0b8"/><path d="M3 20V9l7-3 7 3v11z" fill="#c8342c"/><circle cx="12" cy="4" r="3" fill="#9a6a4a"/></svg>
                </div>
            </div>
            <div class="vs-tools">
                <i class="grip"></i>
                <svg class="tool" viewBox="0 0 16 16"><circle cx="8" cy="8" r="7" fill="#1e5f9e"/><path d="M8 4 4 8l4 4M4 8h8" fill="none" stroke="#fff" stroke-width="1.800"/></svg><i class="dd">▼</i>
                <svg class="tool" viewBox="0 0 16 16"><circle cx="8" cy="8" r="7" fill="#a8adb6"/><path d="M8 4l4 4-4 4M12 8H4" fill="none" stroke="#ddd" stroke-width="1.800"/></svg>
                <i class="sep"></i>
                <svg class="tool" viewBox="0 0 16 16"><path d="M4 4h9v11H4z" fill="#fff" stroke="#333"/><path d="M4 0l1 3 3-1-2 3 2 2-3-1-1 3-1-3-3 1 2-2-2-3 3 1z" fill="#c98c2a"/></svg><i class="dd">▼</i>
                <svg class="tool" viewBox="0 0 16 16"><path d="M1 6h6l2 2h6v7H1z" fill="#dcb67a"/><path d="M8 4c1-3 4-3 5 0M13 1v3h-3" fill="none" stroke="#1e5f9e" stroke-width="1.500"/></svg>
                <svg class="tool" viewBox="0 0 16 16"><path d="M1 1h14v14H1z" fill="#00539c"/><path d="M4 1h8v6H4zM5 10h6v5H5z" fill="#fff"/></svg>
                <svg class="tool" viewBox="0 0 16 16"><path d="M5 0h11v11H5z" fill="#00539c"/><path d="M0 5h11v11H0z" fill="#00539c"/><path d="M3 5h5v4H3zM8 0h5v4H8z" fill="#fff"/></svg>
                <i class="sep"></i>
                <svg class="tool" viewBox="0 0 16 16"><path d="M6 1 2 5l4 4M3 5h6c6 0 5 9 0 10" fill="none" stroke="#a8adb6" stroke-width="2"/></svg><i class="dd dim">▼</i>
                <svg class="tool" viewBox="0 0 16 16"><path d="M10 1l4 4-4 4M13 5H7c-6 0-5 9 0 10" fill="none" stroke="#a8adb6" stroke-width="2"/></svg><i class="dd dim">▼</i>
                <i class="sep"></i>
                <span class="combo combo-debug">Debug<i>▼</i></span>
                <span class="combo combo-cpu">Any CPU<i>▼</i></span>
                <svg class="tool tool-play" viewBox="0 0 10 16"><path d="M1 1l8 7-8 7z" fill="#2f8f2f"/></svg>
                <span class="start">Start</span><i class="dd">▼</i>
                <i class="sep"></i>
                <svg class="tool tool-lit" viewBox="0 0 16 16"><path d="M4 1h11v11H4z" fill="#dcb67a"/><circle cx="5" cy="11" r="3" fill="none" stroke="#1e5f9e" stroke-width="1.500"/></svg>
                <i class="dd over">▬</i>
                <i class="grip"></i>
                <svg class="tool" viewBox="0 0 16 16"><path d="M1 1l6 7H3zM6 8h9v7H6z" fill="#a8adb6"/></svg>
                <svg class="tool" viewBox="0 0 16 16"><path d="M3 4h8v11H3zM7 1h8v10H7z" fill="none" stroke="#a8adb6"/></svg>
                <i class="sep"></i>
                <svg class="tool" viewBox="0 0 16 16"><path d="M4 3h9M6 6h7M6 9h7M4 12h9" stroke="#a8adb6"/></svg>
                <svg class="tool" viewBox="0 0 16 16"><path d="M1 3h6M7 6h7M7 9h7M3 12h11M3 3l2 2-2 2" fill="none" stroke="#a8adb6"/></svg>
                <i class="sep"></i>
                <svg class="tool" viewBox="0 0 16 16"><path d="M3 0h10v16l-5-4-5 4z" fill="#333"/></svg>
                <svg class="tool" viewBox="0 0 16 16"><path d="M6 2h8v14l-4-3-4 3z" fill="#333"/><path d="M1 3h6M4 0 1 3l3 3" fill="none" stroke="#1e6fb8" stroke-width="1.500"/></svg>
                <svg class="tool" viewBox="0 0 16 16"><path d="M6 2h8v14l-4-3-4 3z" fill="#333"/><path d="M7 3H1M4 0l3 3-3 3" fill="none" stroke="#1e6fb8" stroke-width="1.500"/></svg>
                <svg class="tool" viewBox="0 0 16 16"><path d="M6 2h8v14l-4-3-4 3z" fill="#333"/><path d="M1 1l6 6M7 1 1 7" stroke="#c33" stroke-width="2"/></svg>
                <i class="dd over">▬</i>
            </div>
        </header>

        <div class="vs-body">
            <div class="dock-left"><div class="vert-tab">Data Sources</div></div>

            <div class="tool-col tool-test">
                <section class="tool-win">
                    <div class="tool-head"><span>Test Explorer</span><em>▼ &nbsp;⊥ &nbsp;✕</em></div>
                    <div class="tool-bar">
                        <svg class="tool" viewBox="0 0 16 16"><path d="M5 1l5 6-3 0 6 7-4-3H2l3-3z" fill="#1e5f9e"/></svg>
                        <svg class="tool" viewBox="0 0 16 16"><path d="M2 1v14M5 3h3M5 7h3M5 11h3M10 3h4M10 7h4M10 11h4" stroke="#333" stroke-width="1.500"/></svg><i class="dd">▼</i>
                        <svg class="tool" viewBox="0 0 16 16"><path d="M3 1h10M3 5h10M3 11h10M3 15h10M8 1v14" stroke="#333" stroke-width="1.500"/></svg>
                        <div class="tool-search">Search<svg width="14" height="14"><use href="#vsfind"/></svg></div>
                    </div>
                    <div class="tool-strip"></div>
                    <div class="tests">
                        <div class="tests-video"><svg width="16" height="18" viewBox="0 0 16 18"><path d="M2 6h13v12H2z" fill="#333"/><path d="M6 9l5 3-5 3z" fill="#fff"/><path d="M4 0l1 2 2 0-1 2 1 2-2-1-2 1 1-2-1-2h2z" fill="#e8a020"/></svg><a>Streaming Video: Configure continuous integ</a><i>▼</i></div>
                        <div class="tests-cfg"><a>Configure continuous integration</a><i>▲</i></div>
                        <p class="tests-note">Setup continuous integration(CI) builds to test continuously after every code change.</p>
                        <a class="tests-hide">Don't show this again</a>
                        <div class="tests-links"><a>Cancel</a><i></i><a>Run... ▾</a><i></i><a>Playlist : All Tests ▾</a></div>
                        <div class="test-group"><i>◢</i><b>ATUTests</b> (3)</div>
                        <div class="test-row test-row-on">
                            <svg width="14" height="14" viewBox="0 0 14 14"><circle cx="7" cy="7" r="7" fill="#2f8f4f"/><path d="M5 3.500l5 3.500-5 3.500z" fill="#fff"/></svg>
                            <span>CreateNewUser</span>
                        </div>
                        <div class="test-row test-row-old">
                            <svg width="14" height="14" viewBox="0 0 14 14"><circle cx="7" cy="7" r="7" fill="#bfe3c8"/><path d="M3 7l3 3 5-6" fill="none" stroke="#fff" stroke-width="1.500"/></svg>
                            <span>InvalidLogin</span><small>19 sec</small>
                        </div>
                        <div class="test-row test-row-old">
                            <svg width="14" height="14" viewBox="0 0 14 14"><circle cx="7" cy="7" r="7" fill="#bfe3c8"/><path d="M3 7l3 3 5-6" fill="none" stroke="#fff" stroke-width="1.500"/></svg>
                            <span>Login</span><small>35 sec</small>
                        </div>
                    </div>
                    <div class="tests-detail">
                        <div class="tests-detail-name">CreateNewUser</div>
                        <div class="tests-detail-src">Source: &nbsp;<a>ATUTests.cs line 51</a></div>
                    </div>
                </section>
                <div class="bottom-tabs"><span>Server Explorer</span><span>Toolbox</span><span class="on">Test Explorer</span></div>
            </div>

            <div class="tool-col editor-col">
                <div class="doc-tabs">
                    <span class="doc-tab doc-tab-on">ATUTests.cs <small>⊣</small> ✕</span>
                    <span class="doc-tab">ATUActions.cs</span>
                    <span class="doc-tab">ATUUIMap.cs</span>
                    <em>▼</em>
                </div>
                <div class="code-nav">
                    <span class="code-combo"><svg class="ico" viewBox="0 0 16 16"><use href="#flask"/></svg>CodedUIDemo<i>▼</i></span>
                    <span class="code-combo"><svg class="ico" viewBox="0 0 16 16"><path d="M1 4h6v5H1zM9 1h5v5H9zM9 10h5v5H9z" fill="#d9902a"/></svg>CodedUIDemo.ATUTests<i>▼</i></span>
                    <span class="code-combo"><svg class="ico" viewBox="0 0 16 16"><path d="M8 1l6 3v7l-6 4-6-4V4z" fill="#fff" stroke="#6a2d91" stroke-width="1.500"/><path d="M8 7v7M2 4l6 3 6-3" fill="none" stroke="#6a2d91"/></svg>CreateNewUser()<i>▼</i></span>
                </div>
                <div class="code-pane">
                    <div class="code-text"><span class="code-ruler"></span></div>
                    <div class="code-scroll">
                        <svg class="split" width="14" height="16" viewBox="0 0 14 16"><path d="M1 8h12M7 1v5M7 10v5M4 3l3-2 3 2M4 13l3 2 3-2" fill="none" stroke="#333"/></svg>
                        <svg class="warn" width="14" height="14" viewBox="0 0 14 14"><path d="M7 1l6 12H1z" fill="#f5c518" stroke="#333"/><path d="M7 5v5" stroke="#333" stroke-width="1.500"/></svg>
                        <span class="up"></span>
                        <span class="mark mark-1"></span><span class="mark mark-2"></span><span class="mark mark-3"></span><span class="mark mark-4"></span><span class="mark mark-5"></span><span class="mark mark-6"></span><span class="mark mark-7"></span>
                        <span class="code-thumb"></span>
                        <span class="mark mark-blue"></span>
                        <span class="down"></span>
                    </div>
                </div>
                <div class="peek"><span class="peek-x">X</span></div>
                <div class="output">
                    <pre>------ Run test started ------</pre>
                    <div class="out-scroll"><span class="up"></span><span class="out-thumb"></span><span class="down"></span></div>
                </div>
                <div class="bottom-tabs"><span class="on">Output</span><span>Error List</span><span>Code Coverage Results</span></div>

                <!-- app under test, on top of the editor -->
                <div class="alaris">
                    <div class="alaris-title">
                        <svg width="18" height="20" viewBox="0 0 28 28"><use href="#t-alaris"/></svg>
                        <span>Alaris Technical Utility</span>
                        <div class="alaris-ctrl"><span>–</span><span class="alaris-max"></span><span>✕</span></div>
                    </div>
                    <div class="alaris-head">
                        <span class="alaris-brand">Alaris Technical Utility</span>
                        <svg class="alaris-gear" width="20" height="20" viewBox="0 0 20 20"><circle cx="10" cy="10" r="6" fill="none" stroke="#6a7d92" stroke-width="4"/><path d="M10 0v4M10 16v4M0 10h4M16 10h4M3 3l3 3M14 14l3 3M3 17l3-3M14 6l3-3" stroke="#6a7d92" stroke-width="3"/></svg>
                        <span class="alaris-help">?</span>
                        <span class="alaris-user">SuperAdmin<svg width="20" height="12" viewBox="0 0 20 12"><path d="M1 1l9 10 9-10" fill="none" stroke="#6a7d92" stroke-width="2"/></svg></span>
                    </div>
                    <div class="alaris-body">
                        <h1>User Management</h1>
                        <div class="alaris-btns">
                            <span class="a-btn a-btn-on">New</span><span class="a-btn">Edit</span><span class="a-btn">Reset</span>
                            <span class="a-select">All Users<svg width="9" height="6" viewBox="0 0 9 6"><path d="M1 1l3.500 4L8 1" fill="none" stroke="#222"/></svg></span>
                        </div>
                        <div class="a-table"><span class="a-first">First Name<svg width="16" height="10" viewBox="0 0 16 10"><path d="M1 1l7 8 7-8" fill="none" stroke="#596676" stroke-width="1.500"/></svg></span><span class="a-last">Last Name</span></div>
                    </div>

                    <div class="dialog">
                        <div class="dialog-head">Create New User</div>
                        <div class="dialog-body">
                            <div class="form">
                                <label class="f-label">First Name</label><div class="f-input">Kholoud</div>
                                <label class="f-label">Last Name</label><div class="f-input">Mohamed</div>
                                <label class="f-label">Username</label><div class="f-input">kmohamed</div>
                                <div class="f-pass">
                                    <label class="f-label">Password</label>
                                    <span class="f-show"><span class="check"></span>Show</span>
                                </div>
                                <div class="f-input f-input-bad">•••••••••••</div>
                                <label class="f-label f-label-re">Re-type password</label>
                                <div class="f-input f-input-re">•••••••••••</div>
                                <label class="f-label f-label-lang">Language preference?</label>
                                <div class="f-select"><b>Select a language</b><i><svg width="8" height="5" viewBox="0 0 8 5"><path d="M1 1l3 3 3-3" fill="none" stroke="#333"/></svg></i></div>
                                <div class="f-perm"><span class="check"></span>Permission to change <u>download paths?</u></div>
                            </div>
                            <div class="rules">
                                <div class="rule rule-top"><svg><use href="#tick"/></svg><span>First name must be alphanumeric<br>2-40 characters long</span></div>
                                <div class="rule rule-top"><svg><use href="#tick"/></svg><span>Last name must be alphanumeric<br>2-40 characters long</span></div>
                                <div class="rule rule-top"><svg><use href="#tick"/></svg><span>Usernames must be unique, 3-40<br>alphanumeric characters.</span></div>
                                <div class="rules-title">Your Password must be...</div>
                                <div class="rule rule-pw"><svg><use href="#tick"/></svg><span>8-20 characters long</span></div>
                                <div class="rule rule-pw"><svg><use href="#tick"/></svg><span>at least one letter</span></div>
                                <div class="rule rule-pw"><svg><use href="#tick"/></svg><span>at least one number</span></div>
                                <div class="rule rule-pw rule-bad"><svg><use href="#cross"/></svg><span>at least one uppecase letter</span></div>
                                <div class="rule rule-pw"><svg><use href="#tick"/></svg><span>at least one special character</span></div>
                                <div class="rule rule-pw rule-two"><svg><use href="#tick"/></svg><span>match new password and<br>confirmation password</span></div>
                            </div>
                        </div>
                        <div class="dialog-foot"><span class="d-save">Save</span><span class="d-cancel">Cancel</span></div>
                    </div>
                </div>
            </div>

            <div class="tool-col tool-sol">
                <section class="tool-win">
                    <div class="tool-head"><span>Solution Explorer</span><em>▼ &nbsp;⊥ &nbsp;✕</em></div>
                    <div class="tool-bar tool-bar-sol">
                        <svg class="tool" viewBox="0 0 16 16"><circle cx="8" cy="8" r="7" fill="#a8adb6"/><path d="M8 4 4 8l4 4M4 8h8" fill="none" stroke="#ddd" stroke-width="1.800"/></svg>
                        <svg class="tool" viewBox="0 0 16 16"><circle cx="8" cy="8" r="7" fill="#a8adb6"/><path d="M8 4l4 4-4 4M12 8H4" fill="none" stroke="#ddd" stroke-width="1.800"/></svg>
                        <svg class="tool" viewBox="0 0 16 16"><path d="M8 1 1 8h2v7h4v-4h2v4h4V8h2z" fill="none" stroke="#333" stroke-width="1.500"/></svg>
                        <i class="sep"></i>
                        <svg class="tool" viewBox="0 0 16 16"><circle cx="9" cy="10" r="5" fill="none" stroke="#333"/><path d="M9 7v3l2 1M3 1l3 4" fill="none" stroke="#333"/></svg><i class="dd">▼</i>
                        <svg class="tool" viewBox="0 0 16 16"><path d="M2 5h10M9 2l3 3-3 3M14 11H4M7 8l-3 3 3 3" fill="none" stroke="#333" stroke-width="1.500"/></svg>
                        <svg class="tool" viewBox="0 0 16 16"><path d="M6 1h9v9H6zM2 5h9v10H2z" fill="#dbe0eb" stroke="#333"/></svg>
                        <svg class="tool" viewBox="0 0 16 16"><path d="M6 1h9v9H6zM2 5h9v10H2z" fill="none" stroke="#a8adb6"/></svg>
                        <i class="sep"></i>
                        <svg class="tool" viewBox="0 0 16 16"><path d="M13 1a4 4 0 0 0-5 5L1 13l2 2 7-7a4 4 0 0 0 5-5l-2 2-2-2z" fill="#333"/></svg>
                        <span class="sol-lit"><svg width="14" height="8" viewBox="0 0 14 8"><path d="M0 4h6M6 0h8v8H6z" stroke="#333" fill="#333"/></svg></span>
                    </div>
                    <div class="tool-search tool-search-sol">Search Solution Explorer (Ctrl+;)<svg width="14" height="14"><use href="#vsfind"/></svg></div>
                    <ul class="sol">
                        <li class="sol-on"><svg class="ico" viewBox="0 0 16 16"><rect x="3" y="0" width="12" height="14" fill="#fff" stroke="#333"/><path d="M3 10l3 3 3-5v7l-3-2-3 2z" fill="#6a2d91"/></svg>Solution 'CodedUIDemo' (1 project)</li>
                        <li class="sol-1"><i class="sol-open">◢</i><svg class="ico"><use href="#flask"/></svg><b>CodedUIDemo</b></li>
                        <li class="sol-2"><svg class="sol-tw"><use href="#twist"/></svg><svg class="ico" viewBox="0 0 16 16"><path d="M13 1a4 4 0 0 0-5 5L1 13l2 2 7-7a4 4 0 0 0 5-5l-2 2-2-2z" fill="#444"/></svg>Properties</li>
                        <li class="sol-2"><svg class="sol-tw"><use href="#twist"/></svg><svg class="ico" viewBox="0 0 16 16"><path d="M1 5h4v6H1zM10 3h5v10h-5zM5 8h5" fill="#444" stroke="#444"/></svg>References</li>
                        <li class="sol-2"><span class="sol-tw"></span><svg class="ico" viewBox="0 0 16 16"><path d="M5 1h7l3 3v11H5z" fill="#fff" stroke="#555"/><path d="M1 8h5v3H1zM3 11v4" stroke="#444" fill="#fff"/></svg>App.Config</li>
                        <li class="sol-2"><svg class="sol-tw"><use href="#twist"/></svg><svg class="ico"><use href="#csfile"/></svg>ATUActions.cs</li>
                        <li class="sol-2"><svg class="sol-tw"><use href="#twist"/></svg><svg class="ico"><use href="#csfile"/></svg>ATUTests.cs</li>
                        <li class="sol-2"><svg class="sol-tw"><use href="#twist"/></svg><svg class="ico"><use href="#csfile"/></svg>ATUUIMap.cs</li>
                        <li class="sol-2"><svg class="sol-tw"><use href="#twist"/></svg><svg class="ico"><use href="#csfile"/></svg>Data.cs</li>
                    </ul>
                </section>
                <div class="bottom-tabs bottom-tabs-sol"><span>Tabul...</span><span class="on">Soluti...</span><span>Team...</span><span>Class...</span><span>Notifi...</span></div>
            </div>

            <div class="dock-right"><div class="vert-tab">Diagnostic Tools</div><div class="vert-tab">Properties</div></div>
        </div>

        <footer class="vs-status">
            <span>Ready</span>
            <div class="vs-status-right">
                <span class="publish"><svg width="8" height="14" viewBox="0 0 8 14"><path d="M4 0l4 5H5v9H3V5H0z" fill="#dce9f5"/></svg>Publish <small>▲</small></span>
                <svg width="16" height="18" viewBox="0 0 16 18"><ellipse cx="8" cy="9" rx="7" ry="8" fill="#fff"/><ellipse cx="8" cy="9" rx="5" ry="6" fill="#2f8f4f"/><path d="M8 5v7M5 9l3 3 3-3" fill="none" stroke="#fff"/></svg>
                <span class="status-dot"></span>
            </div>
        </footer>
    </div>

    <div class="taskbar">
        <svg class="tb-start" viewBox="0 0 16 16"><path d="M0 2.500l6.500-1V7.500H0zM7.500 1.300 16 0v7.500H7.500zM0 8.500h6.500v6L0 13.500zM7.500 8.500H16V16l-8.500-1.300z" fill="#fff"/></svg>
        <span class="tb-circle"></span>
        <svg class="tb-view" viewBox="0 0 20 14"><rect x="4" y="1" width="12" height="12" fill="none" stroke="#fff"/><path d="M2 3H.5v8H2M18 3h1.500v8H18" fill="none" stroke="#fff"/></svg>
        <div class="apps">
            <span class="app on"><svg><use href="#t-rdp"/></svg></span>
            <span class="app on"><svg><use href="#t-folder"/></svg></span>
            <span class="app on"><svg><use href="#t-outlook"/></svg></span>
            <span class="app alert"><svg><use href="#t-skype"/></svg></span>
            <span class="app on"><svg><use href="#t-firefox"/></svg></span>
            <span class="app"><svg><use href="#t-edge"/></svg></span>
            <span class="app"><svg><use href="#t-ie"/></svg></span>
            <span class="app on"><svg><use href="#t-chrome"/></svg></span>
            <span class="app on"><svg><use href="#t-keys"/></svg></span>
            <span class="app on"><svg><use href="#t-vs"/></svg></span>
            <span class="app"><svg><use href="#t-eclipse"/></svg></span>
            <span class="app"><svg><use href="#t-idea"/></svg></span>
            <span class="app"><svg><use href="#t-sublime"/></svg></span>
            <span class="app on"><svg><use href="#t-git"/></svg></span>
            <span class="app on"><svg><use href="#t-notepad"/></svg></span>
            <span class="app"><svg><use href="#t-skype2"/></svg></span>
            <span class="app"><svg><use href="#t-planet"/></svg></span>
            <span class="app link-y"><svg><use href="#t-link"/></svg></span>
            <span class="app link-g"><svg><use href="#t-link"/></svg></span>
            <span class="app link-b"><svg><use href="#t-link"/></svg></span>
            <span class="app on"><svg><use href="#t-note"/></svg></span>
            <span class="app on"><svg><use href="#t-vs"/></svg></span>
            <span class="app on"><svg><use href="#t-excel"/></svg></span>
            <span class="app cur"><svg><use href="#t-alaris"/></svg></span>
            <span class="app on"><svg><use href="#t-s"/></svg></span>
            <span class="app on"><svg><use href="#t-chrome"/></svg></span>
        </div>
        <span class="wm">WALLPAPERSWIDE.COM</span>
        <div class="tray tray-end"><span class="clock"><span>7:58 PM</span><span>12/17/2017</span></span></div>
    </div>
</section>

</div>
</body>
</html>
```

FILE: styles.css
```css
* {
    box-sizing: border-box;
}
html, body {
    margin: 0;
    padding: 0;
    width: 3840px;
    height: 1080px;
    overflow: hidden;
}
body {
    font-family: "Open Sans", "Noto Sans", sans-serif;
    font-size: 12px;
    letter-spacing: -0.25px;
    color: #222;
    background: #222;
}
a {
    color: inherit;
}
i, em {
    font-style: normal;
}
.defs {
    position: absolute;
}
.ico {
    width: 16px;
    height: 16px;
    flex: none;
}
.desk {
    display: flex;
    height: 1080px;
}
.monitor {
    width: 1920px;
    height: 1080px;
    display: flex;
    flex-direction: column;
}

/* browser chrome */
.firefox {
    position: relative;
    height: 1040px;
    display: flex;
    flex-direction: column;
    background: #fff;
}
.tabs {
    height: 33px;
    display: flex;
    background: #c8c8c8;
    border-bottom: 1px solid #8e8e8e;
}
.tab {
    width: 142.4px;
    display: flex;
    align-items: center;
    gap: 6px;
    padding: 0 9px;
    color: #3a3a3a;
    font-size: 13px;
    border-right: 1px solid #9a9a9a;
}
.tab-title {
    flex: 1;
    white-space: nowrap;
    overflow: hidden;
    -webkit-mask-image: linear-gradient(90deg, #000 75%, transparent);
    mask-image: linear-gradient(90deg, #000 75%, transparent);
}
.tab-x {
    font-size: 12px;
    color: #333;
}
.tab-active {
    background: #f5f5f6;
    border-top: 3px solid #0a84ff;
    height: 33px;
}
.tab-new {
    width: 34px;
    text-align: center;
    font-size: 26px;
    line-height: 30px;
    font-weight: 300;
    color: #333;
}
.win-btns {
    margin-left: auto;
    display: flex;
    align-items: center;
    gap: 30px;
    padding-right: 17px;
    font-size: 13px;
    color: #666;
}
.win-restore {
    width: 9px;
    height: 11px;
    border: 1px solid #666;
}
.navbar {
    height: 37px;
    display: flex;
    align-items: center;
    padding-left: 5px;
    background: #f9f9fa;
}
.back-btn {
    width: 32px;
    height: 31px;
    border: 1px solid #aaa;
    border-radius: 50%;
    background: #fff;
    display: flex;
    align-items: center;
    justify-content: center;
}
.nav-ico {
    width: 18px;
    height: 18px;
    margin-left: 14px;
}
.nav-ico:first-of-type {
    margin-left: 8px;
}
.urlbar {
    width: 1074px;
    height: 29px;
    margin-left: 6px;
    display: flex;
    align-items: center;
    gap: 4px;
    padding: 0 7px 0 9px;
    background: #fff;
    border: 1px solid #bbb;
    border-radius: 2px;
}
.url-text {
    flex: 1;
    margin-left: 5px;
    font-size: 15.5px;
    color: #888;
}
.url-text b {
    font-weight: 400;
    color: #222;
}
.url-dots {
    font-size: 11px;
    color: #444;
    margin-right: 4px;
}
.searchbar {
    width: 298px;
    height: 29px;
    margin-left: 10px;
    display: flex;
    align-items: center;
    gap: 8px;
    padding-left: 8px;
    background: #fff;
    border: 1px solid #ccc;
    border-radius: 2px;
    color: #777;
    font-size: 14px;
}
.nav-right {
    flex: 1;
    display: flex;
    align-items: center;
    justify-content: flex-end;
    gap: 16px;
    padding-right: 12px;
}
.nav-menu {
    margin-left: 6px;
}
.bookmarks {
    height: 23px;
    display: flex;
    align-items: center;
    gap: 11px;
    padding: 0 0 1px 12px;
    background: #f9f9fa;
    border-bottom: 1px solid #d6d6d6;
    font-size: 12.5px;
    letter-spacing: -0.4px;
    color: #111;
}
.bm {
    display: flex;
    align-items: center;
    gap: 4px;
    white-space: nowrap;
}

/* axure viewer */
.axure {
    flex: 1;
    min-height: 0;
    display: flex;
}
.rail {
    width: 55px;
    background: #8b9098;
    display: flex;
    flex-direction: column;
    color: #fff;
}
.rail-toggle {
    height: 21px;
    background: #5f6469;
    text-align: center;
    padding-top: 4px;
}
.rail-item {
    height: 78.5px;
    display: flex;
    flex-direction: column;
    align-items: center;
    justify-content: center;
    gap: 5px;
    font-size: 10px;
    letter-spacing: 0.3px;
}
.rail-item-on {
    background: #f4f4f4;
    border-left: 5px solid #2a8fe0;
    color: #555;
    padding-right: 5px;
}
.rail-x {
    font: italic 28px/30px "Liberation Serif", serif;
    color: #ddd;
}
.rail-close {
    margin-top: auto;
    height: 22px;
    background: #666b72;
    text-align: center;
    font-size: 11px;
    line-height: 22px;
    letter-spacing: 0.3px;
}
.pages {
    width: 241px;
    background: #f4f4f4;
    border-right: 1px solid #9a9a9a;
    color: #555;
}
.pages-head {
    height: 81px;
    padding: 25px 12px 0;
    border-bottom: 1px solid #ddd;
}
.pages-label {
    font-size: 12px;
    line-height: 18px;
}
.pages-row {
    display: flex;
    align-items: center;
    gap: 8px;
    margin-top: 4px;
    font-size: 14px;
}
.pages-row strong {
    flex: 1;
    font-weight: 600;
    color: #444;
}
.pages-search {
    width: 216px;
    height: 27px;
    margin: 9px 0 0 12px;
    padding: 0 5px;
    background: #fff;
    border-top: 1px solid #ddd;
    color: #999;
    font-size: 12px;
    line-height: 26px;
}
.tree {
    list-style: none;
    margin: 11px 0 0;
    padding: 0;
}
.tree li {
    height: 24.5px;
    display: flex;
    align-items: center;
    font-size: 13px;
    white-space: nowrap;
}
.twisty {
    width: 20px;
    flex: none;
    font-size: 9px;
    color: #666;
}
.tree-ico {
    width: 12px;
    height: 16px;
    margin-right: 8px;
    flex: none;
}
.lv0 {
    padding-left: 8px;
}
.lv1 {
    padding-left: 25px;
}
.lv2 {
    padding-left: 42px;
}
.tree-on {
    background: #c8dff0;
}
.viewer {
    flex: 1;
    min-width: 0;
    display: flex;
    flex-direction: column;
    font-family: "Liberation Sans", Arial, sans-serif;
    letter-spacing: 0;
}
.viewer-main {
    flex: 1;
    min-height: 0;
    display: flex;
}
.canvas {
    position: relative;
    flex: 1;
    overflow: hidden;
    background: #fff;
}
.vbar {
    width: 16px;
    background: #f7f7f7;
    display: flex;
    flex-direction: column;
    align-items: center;
    color: #555;
    font-size: 11px;
}
.vbar-up {
    height: 18px;
    line-height: 20px;
}
.vbar-thumb {
    width: 14px;
    height: 394px;
    background: #cdcdcd;
}
.hbar {
    height: 16px;
    display: flex;
    align-items: center;
    background: #f1f1f1;
    color: #444;
}
.hbar-left {
    width: 14px;
    margin-left: 3px;
    font-size: 15px;
    font-weight: 700;
}
.hbar-thumb {
    width: 428px;
    height: 16px;
    margin-left: 1149px;
    background: #c8c8c8;
}

/* wireframe phones */
.sheet-title {
    position: absolute;
    margin: 0;
    font-size: 20px;
    font-weight: 400;
    line-height: 24px;
    color: #333;
    white-space: nowrap;
}
.sheet-title-adv {
    left: 174px;
    top: 5px;
}
.sheet-title-saved {
    left: 684px;
    top: 7px;
}
.sheet-title-results {
    left: 1184px;
    top: 15px;
}
.phone {
    position: absolute;
    width: 408px;
    height: 890px;
    border: 5px solid #ccc;
    border-radius: 60px;
    background: #fff;
}
.phone-back {
    left: -353px;
    top: 94px;
}
.phone-adv {
    left: 167px;
    top: 84px;
}
.phone-saved {
    left: 673px;
    top: 85px;
}
.phone-results {
    left: 1177px;
    top: 94px;
}
.side {
    position: absolute;
    width: 5px;
    background: #ccc;
}
.side-a {
    left: -10px;
    top: 97px;
    height: 27px;
}
.side-b {
    left: -10px;
    top: 160px;
    height: 41px;
}
.side-c {
    left: -10px;
    top: 210px;
    height: 40px;
}
.side-d {
    right: -10px;
    top: 160px;
    height: 41px;
}
.phone-top {
    height: 93px;
    padding-top: 31px;
    display: flex;
    flex-direction: column;
    align-items: center;
}
.cam {
    width: 11px;
    height: 11px;
    border-radius: 50%;
    background: #ccc;
}
.speaker-row {
    display: flex;
    align-items: center;
    gap: 7px;
    margin-top: 7px;
    padding-right: 20px;
}
.lens {
    width: 13px;
    height: 13px;
    border-radius: 50%;
    background: radial-gradient(circle, #f06292 0 2.5px, #ccc 3px);
}
.speaker {
    width: 67px;
    height: 6px;
    border-radius: 3px;
    background: #ccc;
}
.screen {
    width: 376px;
    height: 671px;
    margin-left: 13px;
    border-left: 1px solid #ddd;
    border-right: 1px solid #ddd;
    border-bottom: 3px solid #ddd;
    background: #fff;
    color: #333;
}
.app-head {
    height: 65px;
    display: flex;
    align-items: flex-end;
    padding: 0 0 11px 17px;
    background: #f2f2f2;
    border-bottom: 2px solid #f06292;
}
.burger {
    width: 15px;
    height: 16px;
    border-radius: 2px;
    background: linear-gradient(#000 4px, transparent 4px 6px, #000 6px 10px, transparent 10px 12px, #000 12px);
}
.app-name {
    width: 308px;
    text-align: center;
    color: #000;
    font-size: 16px;
    line-height: 18px;
}
.nav1 {
    height: 51px;
    background: #f2f2f2;
    border: 1px solid #666;
    text-align: center;
    font-size: 18px;
    line-height: 49px;
}
.nav2 {
    height: 50px;
    display: flex;
    border-right: 1px solid #666;
}
.nav2-left {
    position: relative;
    width: 311px;
    display: flex;
    align-items: center;
    padding-left: 18px;
    background: #f2f2f2;
    border: 1px solid #666;
    border-top-width: 2px;
    color: #1d9be8;
    font-size: 14px;
}
.nav2-title {
    position: absolute;
    left: 64px;
    right: 0;
    text-align: center;
    color: #333;
    font-size: 18px;
}
.nav2-x {
    flex: 1;
    text-align: center;
    font-size: 22px;
    font-weight: 700;
    line-height: 52px;
    color: #222;
}
.find {
    height: 96px;
    padding: 20px 8px 0 10px;
    border: 1px solid #666;
    border-top: none;
}
.find-input {
    height: 45px;
    display: flex;
    align-items: center;
    gap: 7px;
    padding-left: 6px;
    border: 1px solid #666;
    font-size: 18px;
    color: #222;
}
.find-lens {
    width: 31px;
    height: 31px;
}
.find-links {
    display: flex;
    justify-content: flex-end;
    gap: 32px;
    margin-top: 7px;
    font-size: 13.5px;
    line-height: 16px;
    color: #1d9be8;
}
.reset {
    margin-top: 12px;
    padding-right: 10px;
    text-align: right;
    font-size: 14px;
    line-height: 18px;
    color: #666;
}
.found {
    margin: 9px 0 11px 14px;
    font-size: 16px;
    line-height: 20px;
    font-weight: 700;
}
.grp {
    width: 366px;
    height: 37px;
    margin-left: 3px;
    display: flex;
    align-items: center;
    justify-content: space-between;
    padding: 0 11px 0 10px;
    background: #c9c9c9;
    border-bottom: 1px solid #999;
    font-size: 14px;
}
.grp small {
    font-size: 12px;
    letter-spacing: -0.2px;
    color: #666;
}
.grid {
    width: 364px;
    margin-left: 3px;
    table-layout: fixed;
    border-collapse: collapse;
    font-size: 13px;
    line-height: 16px;
}
.grid th, .grid td {
    border: 1px solid #666;
    padding: 0 4px;
    text-align: center;
    vertical-align: middle;
}
.grid tr:first-child th {
    height: 63px;
    font-size: 12px;
}
.grid tr:first-child th:first-child {
    width: 124px;
    background: #f0f0f0;
}
.grid tr:first-child th:nth-child(2) {
    width: 70px;
}
.grid tr:first-child th:nth-child(3) {
    width: 66px;
}
.grid .name {
    height: 116px;
    background: #f0f0f0;
    font-weight: 400;
    color: #0a6ef0;
}
.grid .date {
    padding: 0 3px;
    word-break: break-all;
}
.last td {
    border-bottom: 4px solid #666;
}
.grid-short .last .name {
    height: 99px;
}
.filled {
    width: 370px;
    height: 70px;
    margin: 13px 0 0 3px;
    background: #666;
}
.phone-back .reset {
    margin-top: 10px;
}
.phone-back .grp {
    margin-top: 8px;
}
.home {
    width: 55px;
    height: 55px;
    margin: 16px 0 0 168px;
    border: 5px solid #ccc;
    border-radius: 50%;
}
.adv {
    margin: 11px 2px 0;
    padding: 0 10px;
    background: #f0f0f0;
}
.adv-head {
    display: flex;
    justify-content: space-between;
    padding: 17px 9px 0 7px;
    font-size: 18px;
    line-height: 24px;
}
.adv label {
    display: block;
    font-size: 16px;
    line-height: 18px;
}
.adv-head + label {
    margin-top: 16px;
}
.hint {
    width: 356px;
    height: 40px;
    margin: 8px 0 21px;
    padding-left: 7px;
    background: #fff;
    border: 1px solid #d0d0d0;
    border-radius: 2px;
    color: #aaa;
    font-size: 16px;
    line-height: 38px;
}
.adv-check {
    display: flex;
    align-items: center;
    gap: 7px;
    margin-top: -13px;
    font-size: 16px;
    line-height: 20px;
}
.box {
    width: 13px;
    height: 13px;
    border: 1px solid #333;
    background: #fff;
    flex: none;
}
.adv hr {
    margin: 8px 0 10px;
    width: 356px;
    border: none;
    border-top: 1px solid #ccc;
}
.adv h4 {
    margin: 0;
    font-size: 16px;
    line-height: 22px;
}
.adv-pair {
    display: flex;
    margin-top: 9px;
    font-size: 16px;
    line-height: 20px;
}
.adv-opt {
    width: 190px;
    display: flex;
    align-items: center;
    gap: 2px;
}
.adv h4.adv-style {
    margin-top: 25px;
}
.style-grid {
    width: 346px;
    height: 200px;
    margin-top: 10px;
    display: grid;
    grid-template-columns: 86px 90px 90px 76px;
    grid-template-rows: 44px 38px;
    background: #fff;
    color: #666;
    font-size: 20px;
    text-align: center;
    align-items: center;
}
.style-grid .style-name {
    padding-left: 17px;
    text-align: left;
}
.style-box {
    display: inline-block;
    width: 21px;
    height: 20px;
    background: #e8eeec;
    border: 2px solid #4a7ba6;
}

.uimap {
    position: absolute;
    left: 1685px;
    top: 978px;
    width: 224px;
    height: 60px;
    padding: 4px 8px;
    background: #cfd6e5;
    border: 2px solid #8f9bb3;
    color: #222;
    font-size: 13px;
}
.uimap-head {
    display: flex;
    justify-content: space-between;
}
.uimap-tools {
    display: flex;
    align-items: center;
    gap: 17px;
    margin: 6px 0 0 16px;
}
.uimap-sep {
    width: 1px;
    height: 22px;
    background: #889;
}

/* taskbar */
.taskbar {
    position: relative;
    height: 40px;
    display: flex;
    align-items: center;
    background: #232323;
    color: #eee;
    overflow: hidden;
}
.tb-start {
    width: 16px;
    height: 16px;
    margin: 0 32px 0 16px;
    flex: none;
}
.tb-circle {
    width: 16px;
    height: 16px;
    margin-right: 33px;
    border: 2px solid #fff;
    border-radius: 50%;
    flex: none;
}
.tb-view {
    width: 20px;
    height: 14px;
    margin-right: 16px;
    flex: none;
}
.apps {
    display: flex;
    height: 40px;
    margin-left: 3px;
}
.app {
    position: relative;
    width: 49px;
    display: flex;
    align-items: center;
    justify-content: center;
    padding-bottom: 2px;
}
.app svg {
    width: 26px;
    height: 26px;
}
.app.on::after, .app.cur::after {
    content: "";
    position: absolute;
    left: 4px;
    right: 5px;
    bottom: 0;
    height: 2px;
    background: #a8a8a8;
}
.app.alert {
    background: #9b581d;
    border-bottom: 2px solid #f26b00;
}
.app.cur {
    background: #383838;
}
.link-y {
    color: #f5b800;
}
.link-g {
    color: #3fb24a;
}
.link-b {
    color: #2a63c8;
}
.wm {
    position: absolute;
    left: 1566px;
    right: 0;
    bottom: 0;
    height: 23px;
    padding-left: 16px;
    border-radius: 14px 0 0 0;
    background: #2a2a2a;
    color: #3f3f3f;
    font: 14px/22px "Liberation Sans", sans-serif;
    letter-spacing: 6px;
    white-space: nowrap;
    overflow: hidden;
}
.tray {
    position: relative;
    margin-left: auto;
    display: flex;
    align-items: center;
    gap: 8px;
    padding-right: 25px;
}
.tray-up {
    margin: 0 5px 0 12px;
}
.tray-lang {
    margin-left: 5px;
    font-size: 12px;
}
.clock {
    width: 76px;
    display: flex;
    flex-direction: column;
    text-align: center;
    line-height: 17px;
    font-size: 12px;
}
.tray-note {
    margin-left: 7px;
}
.tray-end {
    padding-right: 0;
}
.tray-end .clock {
    width: 63px;
}

/* visual studio */
.vs {
    height: 1040px;
    display: flex;
    flex-direction: column;
    background: #293955;
}
.vs-chrome {
    height: 79px;
    background: #d6dbe9;
    color: #1e1e1e;
}
.vs-title {
    height: 30px;
    display: flex;
    align-items: center;
    gap: 12px;
    padding: 0 0 2px 12px;
}
.vs-logo {
    margin-top: 6px;
}
.vs-name {
    flex: 1;
    margin: 6px 0 0 -1px;
    color: #444;
    font-size: 13px;
}
.quick {
    width: 199px;
    height: 21px;
    display: flex;
    align-items: center;
    justify-content: space-between;
    padding: 0 3px 0 4px;
    background: #f3f5fa;
    border: 1px solid #c5cbdc;
    color: #555;
    font-size: 13px;
}
.vs-win {
    display: flex;
    gap: 20px;
    width: 96px;
    padding-left: 14px;
    font-size: 12px;
}
.vs-menu {
    height: 22px;
    display: flex;
    align-items: center;
    gap: 19px;
    padding-left: 10px;
    font-size: 13px;
    letter-spacing: -0.4px;
}
.vs-user {
    margin-left: auto;
    display: flex;
    align-items: center;
    gap: 6px;
    padding-right: 6px;
    font-size: 13px;
}
.vs-user small {
    font-size: 7px;
    margin-right: 6px;
}
.vs-tools {
    width: 778px;
    height: 22px;
    margin: 1px 0 0 10px;
    display: flex;
    align-items: center;
    gap: 6px;
    background: #cfd6e5;
}
.tool {
    width: 16px;
    height: 16px;
    flex: none;
}
.tool-play {
    width: 10px;
    margin-left: 10px;
}
.tool-lit {
    background: #e3e7f0;
}
.grip {
    width: 5px;
    height: 18px;
    margin: 0 3px;
    background: radial-gradient(circle, #8a92a3 1px, transparent 1px) 0 0 / 3px 3px;
}
.sep {
    width: 1px;
    height: 20px;
    margin: 0 2px;
    background: #a8adb6;
}
.dd {
    font-size: 7px;
    color: #333;
}
.dd.dim {
    color: #a8adb6;
}
.dd.over {
    font-size: 6px;
    margin-top: 10px;
}
.combo {
    height: 20px;
    display: flex;
    align-items: center;
    justify-content: space-between;
    padding: 0 4px;
    background: #fff;
    border: 1px solid #c5cbdc;
    font-size: 13px;
}
.combo i {
    font-size: 7px;
}
.combo-debug {
    width: 66px;
}
.combo-cpu {
    width: 110px;
}
.start {
    font-size: 13px;
}
.vs-body {
    flex: 1;
    min-height: 0;
    display: flex;
    padding: 6px 0 7px;
}
.dock-left {
    width: 32px;
}
.dock-right {
    width: 32px;
    padding-left: 8px;
}
.vert-tab {
    writing-mode: vertical-rl;
    font: 12px "DejaVu Sans", sans-serif;
    letter-spacing: 0.5px;
    color: #dfe5f0;
    margin-left: 8px;
    margin-bottom: 12px;
    white-space: nowrap;
}
.tool-col {
    display: flex;
    flex-direction: column;
    position: relative;
}
.tool-test {
    width: 280px;
}
.editor-col {
    width: 1309px;
    margin: 0 7px 0 6px;
}
.tool-sol {
    width: 254px;
}
.tool-win {
    flex: 1;
    min-height: 0;
    display: flex;
    flex-direction: column;
    background: #fff;
}
.tool-head {
    height: 22px;
    display: flex;
    align-items: center;
    justify-content: space-between;
    padding: 0 6px 0 5px;
    background: #4d6082;
    color: #e8ecf5;
    font-size: 13px;
    flex: none;
}
.tool-head em {
    font-size: 11px;
    color: #c5cee0;
}
.tool-bar {
    height: 28px;
    display: flex;
    align-items: center;
    gap: 5px;
    padding: 0 3px 0 7px;
    background: #cfd6e5;
    flex: none;
}
.tool-search {
    flex: 1;
    height: 20px;
    margin-left: 4px;
    display: flex;
    align-items: center;
    justify-content: space-between;
    padding: 0 8px 0 4px;
    background: #fff;
    border: 1px solid #c5cbdc;
    color: #777;
    font-size: 13px;
}
.tool-strip {
    height: 6px;
    background: #7f7f7f;
    flex: none;
}
.tests {
    height: 533px;
    position: relative;
    padding: 4px 6px 0;
    font-size: 12.5px;
    letter-spacing: -0.4px;
    color: #0a56c2;
    flex: none;
}
.tests-video, .tests-cfg {
    display: flex;
    align-items: center;
    gap: 3px;
    white-space: nowrap;
}
.tests-video {
    height: 22px;
    padding-left: 6px;
    overflow: hidden;
}
.tests-video i, .tests-cfg i {
    margin-left: auto;
    font-size: 8px;
    color: #222;
}
.tests-cfg {
    margin-top: 1px;
    height: 20px;
}
.tests-note {
    margin: -2px 0 0;
    color: #666;
    line-height: 16px;
    width: 262px;
}
.tests-hide {
    display: block;
    margin-top: 6px;
    line-height: 20px;
}
.tests-links {
    display: flex;
    align-items: center;
    gap: 10px;
    margin: 8px 0 0 4px;
    height: 20px;
    white-space: nowrap;
}
.tests-links i {
    width: 1px;
    height: 16px;
    background: #333;
}
.test-group {
    margin-top: 7px;
    height: 19px;
    color: #222;
    display: flex;
    align-items: center;
    gap: 4px;
}
.test-group i {
    font-size: 8px;
    margin-right: 5px;
}
.test-row {
    height: 20.5px;
    margin: 0 -5px 0 12px;
    padding-left: 3px;
    display: flex;
    align-items: center;
    gap: 5px;
    color: #222;
}
.test-row small {
    margin-left: auto;
    font-size: 12.5px;
    color: #aaa;
    padding-right: 3px;
}
.test-row-on {
    background: #c9cfe0;
    margin-top: 0;
}
.test-row-old {
    color: #aaa;
}
.tests-detail {
    flex: 1;
    border-top: 4px solid #293955;
    padding: 8px 9px;
    color: #222;
}
.tests-detail-name {
    font-size: 14px;
    line-height: 20px;
}
.tests-detail-src {
    margin: 6px 0 0 28px;
    font-size: 13px;
}
.tests-detail-src a {
    color: #0a56c2;
}
.bottom-tabs {
    height: 20px;
    display: flex;
    flex: none;
    background: #293955;
    color: #e8ecf5;
    font-size: 13px;
    line-height: 20px;
}
.bottom-tabs span {
    padding: 0 5px;
    background: #4d6082;
    white-space: nowrap;
}
.bottom-tabs .on {
    background: #fff;
    color: #222;
}
.bottom-tabs-sol span {
    flex: 1;
    padding: 0 4px;
    overflow: hidden;
}
.doc-tabs {
    height: 19px;
    display: flex;
    align-items: center;
    color: #e8ecf5;
    font-size: 13px;
}
.doc-tabs em {
    margin-left: auto;
    padding-right: 3px;
    font-size: 8px;
}
.doc-tab {
    width: 112px;
    height: 19px;
    padding-left: 4px;
    line-height: 19px;
    background: #3b5075;
    white-space: nowrap;
}
.doc-tab-on {
    width: 108px;
    background: #364a6d;
}
.doc-tab-on small {
    font-size: 10px;
}
.code-nav {
    height: 24px;
    display: grid;
    grid-template-columns: 434px 433px 433px;
    gap: 4px;
    padding: 1px 0 3px;
    background: #4a5a7c;
}
.code-combo {
    display: flex;
    align-items: center;
    gap: 3px;
    padding: 0 4px;
    background: #fff;
    color: #222;
    font-size: 13px;
}
.code-combo i {
    margin-left: auto;
    font-size: 7px;
}
.code-pane {
    height: 715px;
    display: flex;
    flex: none;
}
.code-text {
    flex: 1;
    background: #eee;
    position: relative;
}
.code-ruler {
    display: block;
    height: 8px;
    background: #f5f5f5;
    border-top: 1px solid #ccc;
}
.code-scroll {
    position: relative;
    width: 25px;
    background: #e6e7ed;
    border-left: 1px solid #ccc;
}
.split {
    position: absolute;
    left: 5px;
    top: 1px;
}
.warn {
    position: absolute;
    left: 5px;
    top: 18px;
}
.up, .down {
    position: absolute;
    left: 7px;
    width: 0;
    height: 0;
    border-left: 5px solid transparent;
    border-right: 5px solid transparent;
}
.up {
    top: 36px;
    border-bottom: 6px solid #8a92a3;
}
.down {
    bottom: 22px;
    border-top: 6px solid #8a92a3;
}
.mark {
    position: absolute;
    right: 0;
    width: 10px;
    height: 2px;
    background: #f5a623;
}
.mark-1 { top: 51px; }
.mark-2 { top: 59px; }
.mark-3 { top: 71px; }
.mark-4 { top: 77px; }
.mark-5 { top: 96px; }
.mark-6 { top: 104px; }
.mark-7 { top: 141px; }
.mark-blue {
    top: 348px;
    width: 24px;
    background: #00c;
}
.code-thumb {
    position: absolute;
    left: 0;
    top: 166px;
    width: 23px;
    height: 234px;
    background: #b8bcc6;
}
.peek {
    margin-top: 6px;
    height: 47px;
    background: #cfd6e5;
    flex: none;
}
.peek-x {
    display: block;
    margin-left: auto;
    width: 24px;
    height: 21px;
    background: #fff29d;
    text-align: center;
    color: #555;
    font-size: 14px;
    line-height: 21px;
}
.output {
    position: relative;
    flex: 1;
    min-height: 0;
    background: #e4e5ea;
    border-bottom: 1px solid #9aa3b8;
}
.output pre {
    margin: 0;
    padding: 1px 0 0 13px;
    font: 12px/16px "Liberation Mono", monospace;
    letter-spacing: 0;
    color: #222;
}
.out-scroll {
    position: absolute;
    right: 2px;
    top: 0;
    bottom: 8px;
    width: 10px;
}
.out-scroll .up {
    left: 0;
    top: 8px;
}
.out-scroll .down {
    left: 0;
    bottom: 18px;
}
.out-thumb {
    position: absolute;
    left: 0;
    top: 18px;
    width: 10px;
    height: 35px;
    background: #b8bcc6;
}

/* app under test */
.alaris {
    position: absolute;
    left: 0;
    top: 51px;
    width: 1284px;
    height: 760px;
    display: flex;
    flex-direction: column;
    box-shadow: 0 0 12px rgba(0, 0, 0, 0.45);
    background: #787878;
    border-right: 1px solid #3a4653;
    border-bottom: 1px solid #3a4653;
}
.alaris-title {
    height: 31px;
    display: flex;
    align-items: center;
    gap: 5px;
    padding-left: 7px;
    background: #4b4a48;
    color: #f2f2f2;
    font-size: 14px;
    flex: none;
}
.alaris-ctrl {
    margin-left: auto;
    display: flex;
    align-items: center;
    gap: 34px;
    padding-right: 15px;
    font-size: 14px;
}
.alaris-max {
    width: 10px;
    height: 12px;
    border: 1px solid #fff;
}
.alaris-head {
    height: 56px;
    display: flex;
    align-items: center;
    padding-left: 5px;
    background: #314d6e;
    color: #6a7d92;
    flex: none;
}
.alaris-brand {
    flex: 1;
    font-size: 37px;
    letter-spacing: -0.9px;
    white-space: nowrap;
}
.alaris-gear {
    margin-right: 47px;
}
.alaris-help {
    font-size: 26px;
    font-weight: 600;
    margin-right: 26px;
}
.alaris-user {
    width: 186px;
    display: flex;
    align-items: flex-end;
    gap: 4px;
    height: 44px;
    padding: 2px 0 0 9px;
    border-left: 1px solid #56687c;
    font-size: 26px;
    letter-spacing: -0.7px;
}
.alaris-user svg {
    margin-bottom: 8px;
}
.alaris-body {
    flex: 1;
    padding-top: 10px;
    color: #333;
}
.alaris-body h1 {
    margin: 0 0 0 8px;
    font-size: 27px;
    line-height: 36px;
    font-weight: 400;
    letter-spacing: -0.7px;
}
.alaris-btns {
    display: flex;
    align-items: center;
    gap: 12px;
    height: 40px;
    margin: 8px 0 0 6px;
    font-size: 18px;
}
.a-btn {
    width: 100px;
    height: 40px;
    text-align: center;
    line-height: 38px;
    border: 1px solid #6f6f6f;
    border-radius: 3px;
    color: #666;
}
.a-btn-on {
    border: 2px solid #4f4f4f;
    color: #505050;
}
.a-select {
    width: 190px;
    height: 40px;
    margin-left: auto;
    margin-right: 73px;
    display: flex;
    align-items: center;
    justify-content: space-between;
    padding: 0 5px;
    border: 1px solid #3f4a55;
    font-size: 16px;
    color: #222;
}
.a-table {
    height: 56px;
    margin-top: 7px;
    padding: 25px 0 0 72px;
    display: flex;
    gap: 34px;
    border-top: 1px solid #465462;
    border-bottom: 2px solid #6a7480;
    font-size: 18px;
    font-weight: 600;
    color: #505050;
}
.a-first svg {
    margin-left: 8px;
}
.a-last {
    font-weight: 400;
}
.dialog {
    position: absolute;
    left: 292px;
    top: 70px;
    width: 700px;
    height: 651px;
    display: flex;
    flex-direction: column;
    background: #fff;
    color: #222;
    font-size: 14px;
}
.dialog-head {
    height: 51px;
    padding: 0 0 3px 24px;
    background: #689fe8;
    border-bottom: 1px solid #9abcec;
    color: #fff;
    font-size: 17px;
    font-weight: 600;
    line-height: 54px;
    letter-spacing: -0.4px;
    flex: none;
}
.dialog-body {
    flex: 1;
    min-height: 0;
    display: flex;
}
.form {
    width: 340px;
    padding: 8px 0 0 15px;
    flex: none;
}
.f-label {
    display: block;
    height: 20px;
    font-size: 16px;
    line-height: 20px;
    letter-spacing: -0.4px;
}
.f-input {
    width: 260px;
    height: 41px;
    margin: 0 0 12px 1px;
    padding: 0 4px;
    border: 2px solid #c8ccd8;
    border-radius: 4px;
    color: #666;
    font-size: 16px;
    line-height: 37px;
    letter-spacing: -0.4px;
}
.f-pass {
    width: 280px;
    display: flex;
    justify-content: space-between;
    margin: 72px 0 3px 4px;
}
.f-show {
    display: flex;
    align-items: center;
    gap: 10px;
    margin-right: 24px;
    font-size: 15px;
}
.check {
    width: 21px;
    height: 21px;
    flex: none;
    border: 2px solid #d4d8e2;
    border-radius: 3px;
}
.f-input-bad {
    height: 43px;
    margin: 0 0 38px 6px;
    border-color: #e8262a;
    color: #667;
    font-size: 22px;
    letter-spacing: -1px;
}
.f-input-re {
    margin: 0 0 3px 3px;
    border-color: #7ab4ea;
    color: #667;
    font-size: 22px;
    letter-spacing: -1px;
}
.f-label-re {
    margin-left: 2px;
}
.f-select {
    width: 260px;
    height: 29px;
    display: flex;
    align-items: center;
    justify-content: space-between;
    padding-left: 5px;
    border: 1px solid #888;
    font-size: 15px;
    letter-spacing: -0.4px;
}
.f-select b {
    font-weight: 600;
}
.f-select i {
    width: 18px;
    height: 27px;
    background: #f2f2f2;
    text-align: center;
    line-height: 24px;
}
.f-perm {
    display: flex;
    align-items: center;
    gap: 9px;
    margin: 19px 0 0 1px;
    font-size: 15px;
    letter-spacing: -0.4px;
    white-space: nowrap;
    color: #333;
}
.f-perm u {
    margin-left: -5px;
    text-decoration-style: dashed;
}
.rules {
    flex: 1;
    padding-top: 10px;
    color: #41c481;
    font-size: 14px;
    line-height: 17px;
}
.rule {
    display: flex;
    gap: 18px;
    letter-spacing: -0.3px;
}
.rule svg {
    width: 10px;
    height: 14px;
    flex: none;
}
.rule-top {
    height: 34px;
    margin: 0 0 39px 0;
}
.rules-title {
    margin: 95px 0 25px 2px;
    color: #333;
    line-height: 20px;
}
.rule-pw {
    height: 23px;
    padding-left: 9px;
    margin-top: 0;
}
.rule-bad {
    color: #666;
}
.rule-two {
    margin-top: -1px;
    height: 34px;
}
.dialog-foot {
    height: 45px;
    display: flex;
    justify-content: flex-end;
    gap: 20px;
    padding-right: 15px;
    font-size: 16px;
    text-align: center;
    line-height: 38px;
    flex: none;
}
.d-save {
    width: 100px;
    height: 40px;
    border: 1px solid #ccc;
    border-radius: 4px;
    color: #ccc;
}
.d-cancel {
    width: 120px;
    height: 40px;
    border-radius: 4px;
    background: #6ea3ea;
    color: #fff;
}

.tool-bar-sol {
    gap: 4px;
}
.tool-search-sol {
    flex: none;
    height: 21px;
    margin: 0;
    padding-right: 8px;
}
.sol-lit {
    width: 22px;
    height: 26px;
    display: flex;
    align-items: center;
    justify-content: center;
    background: #fff2b8;
    border: 1px solid #e5c365;
}
.sol {
    list-style: none;
    margin: 2px 0 0;
    padding: 0;
    color: #222;
    font-size: 12.5px;
    letter-spacing: -0.4px;
}
.sol li {
    height: 18px;
    display: flex;
    align-items: center;
    gap: 4px;
    white-space: nowrap;
}
.sol li.sol-on {
    height: 20px;
    padding-left: 12px;
    background: #c9cfe0;
    gap: 6px;
}
.sol-1 {
    padding-left: 12px;
}
.sol-1 b {
    font-weight: 600;
}
.sol-open {
    width: 16px;
    font-size: 8px;
}
.sol-2 {
    padding-left: 29px;
}
.sol-tw {
    width: 8px;
    height: 14px;
    margin-right: 9px;
    flex: none;
}

.vs-status {
    height: 23px;
    display: flex;
    align-items: center;
    justify-content: space-between;
    padding: 0 6px 0 4px;
    background: #007acc;
    color: #e8f2fa;
    font-size: 13px;
}
.vs-status-right {
    display: flex;
    align-items: center;
    gap: 14px;
}
.publish {
    display: flex;
    align-items: center;
    gap: 7px;
}
.publish small {
    font-size: 7px;
}
.status-dot {
    width: 16px;
    height: 18px;
    border-radius: 50%;
    background: #d8ecec;
}
```
